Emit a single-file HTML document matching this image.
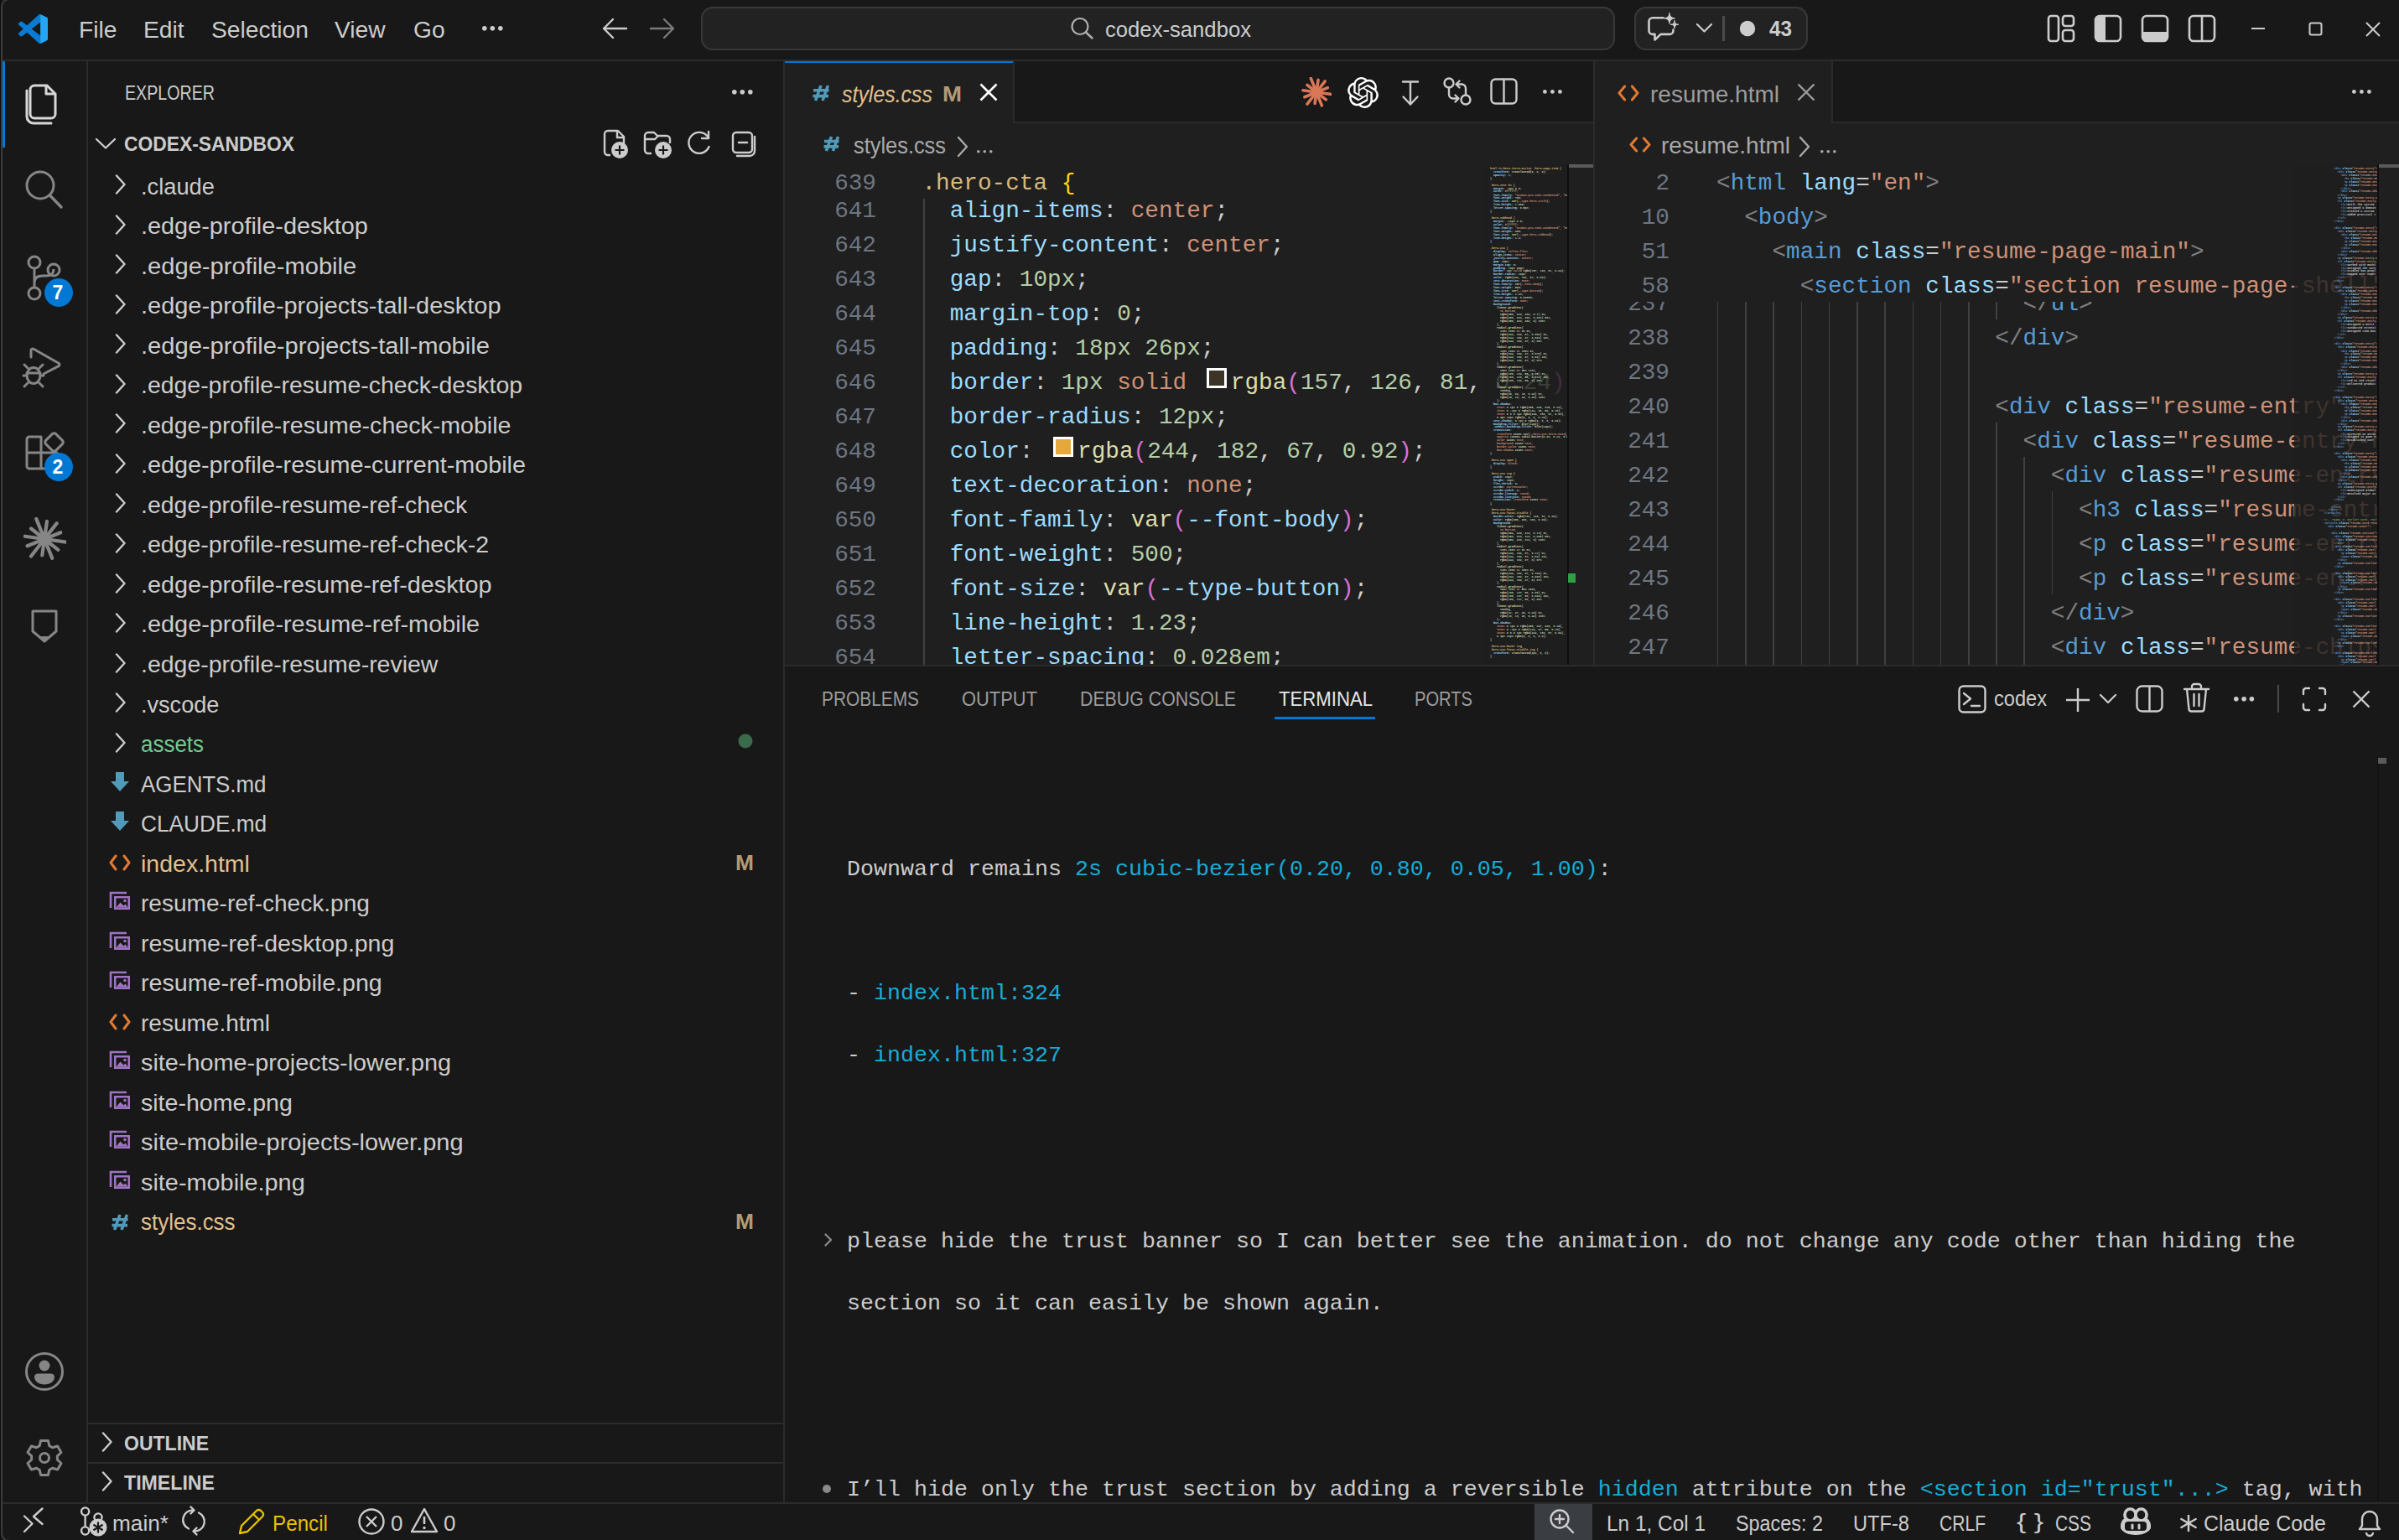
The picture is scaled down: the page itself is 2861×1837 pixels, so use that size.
<!DOCTYPE html><html><head><meta charset="utf-8"><style>
html,body{margin:0;padding:0;width:2861px;height:1837px;overflow:hidden;background:#181818;}
body{position:relative;font-family:"Liberation Sans",sans-serif;}
svg{display:block}
</style></head><body>
<div style="position:absolute;left:0px;top:0px;width:2861px;height:1837px;background:#181818;"></div>
<div style="position:absolute;left:0px;top:71px;width:2861px;height:2px;background:#2b2b2b;"></div>
<div style="position:absolute;left:103px;top:73px;width:2px;height:1719px;background:#2b2b2b;"></div>
<div style="position:absolute;left:934px;top:73px;width:2px;height:1719px;background:#2b2b2b;"></div>
<div style="position:absolute;left:936px;top:73px;width:1925px;height:722px;background:#1f1f1f;"></div>
<div style="position:absolute;left:936px;top:793px;width:1925px;height:2px;background:#2b2b2b;"></div>
<svg style="position:absolute;left:22px;top:17px;" width="35" height="35" viewBox="0 0 100 100" fill="none"><path d="M96.46 10.8 75.86.87a6.23 6.23 0 0 0-7.1 1.2L29.35 38.04 12.19 25.01a4.16 4.16 0 0 0-5.32.24L1.36 30.26a4.16 4.16 0 0 0 0 6.16L16.24 50 1.36 63.58a4.16 4.16 0 0 0 0 6.16l5.51 5.01a4.16 4.16 0 0 0 5.32.24l17.16-13.03 39.41 35.96a6.23 6.23 0 0 0 7.1 1.2l20.6-9.91A6.24 6.24 0 0 0 100 83.6V16.4a6.24 6.24 0 0 0-3.54-5.6zM75.02 72.7 45.11 50l29.91-22.7z" fill="#0a7bd0"/><path d="M75.02 0.6 L96.46 10.8 A6.24 6.24 0 0 1 100 16.4 V83.6 A6.24 6.24 0 0 1 96.46 89.2 L75.86 99.1 A6.23 6.23 0 0 1 75 99.4 Z" fill="#24a6f2"/></svg>
<div style="position:absolute;left:94px;top:17.40px;font-family:'Liberation Sans', sans-serif;font-size:28.2px;line-height:36.66px;color:#cccccc;white-space:pre;">File</div>
<div style="position:absolute;left:171px;top:17.40px;font-family:'Liberation Sans', sans-serif;font-size:28.2px;line-height:36.66px;color:#cccccc;white-space:pre;">Edit</div>
<div style="position:absolute;left:252px;top:17.40px;font-family:'Liberation Sans', sans-serif;font-size:28.2px;line-height:36.66px;color:#cccccc;white-space:pre;">Selection</div>
<div style="position:absolute;left:399px;top:17.40px;font-family:'Liberation Sans', sans-serif;font-size:28.2px;line-height:36.66px;color:#cccccc;white-space:pre;">View</div>
<div style="position:absolute;left:493px;top:17.40px;font-family:'Liberation Sans', sans-serif;font-size:28.2px;line-height:36.66px;color:#cccccc;white-space:pre;">Go</div>
<svg style="position:absolute;left:575px;top:31.2px;" width="25" height="6" viewBox="0 0 25 6" fill="none"><circle cx="2.8" cy="2.8" r="2.8" fill="#cccccc"/><circle cx="12.3" cy="2.8" r="2.8" fill="#cccccc"/><circle cx="21.8" cy="2.8" r="2.8" fill="#cccccc"/></svg>
<svg style="position:absolute;left:716px;top:19px;" width="34" height="30" viewBox="0 0 34 30" fill="none"><path d="M4 15H31M15 4 4 15 15 26" stroke="#cccccc" stroke-width="2.4" stroke-linecap="round" stroke-linejoin="round"/></svg>
<svg style="position:absolute;left:773px;top:19px;" width="34" height="30" viewBox="0 0 34 30" fill="none"><path d="M3 15H30M19 4 30 15 19 26" stroke="#7a7a7a" stroke-width="2.4" stroke-linecap="round" stroke-linejoin="round"/></svg>
<div style="position:absolute;left:836px;top:8px;width:1090px;height:52px;background:#222222;box-sizing:border-box;border:2px solid #383838;border-radius:14px;"></div>
<svg style="position:absolute;left:1276px;top:20px;" width="30" height="28" viewBox="0 0 30 28" fill="none"><circle cx="12" cy="11.5" r="9.5" stroke="#b0b0b0" stroke-width="2.2"/><path d="M19 18.5 26.5 25.5" stroke="#b0b0b0" stroke-width="2.4" stroke-linecap="round"/></svg>
<div style="position:absolute;left:1318px;top:19.09px;font-family:'Liberation Sans', sans-serif;font-size:26px;line-height:33.8px;color:#cccccc;white-space:pre;transform:scaleX(0.9867);transform-origin:0 0;">codex-sandbox</div>
<div style="position:absolute;left:1949px;top:8px;width:207px;height:52px;background:#222222;box-sizing:border-box;border:2px solid #383838;border-radius:14px;"></div>
<svg style="position:absolute;left:1963px;top:15px;" width="42" height="36" viewBox="0 0 42 36" fill="none"><path d="M20.5 6.2H8a4.5 4.5 0 0 0-4.5 4.5V21.4a4.5 4.5 0 0 0 4.5 4.5h2.5v6.6l7-6.6H28a4.5 4.5 0 0 0 4.5-4.5V20.5" stroke="#cccccc" stroke-width="2.6" stroke-linejoin="round" stroke-linecap="round"/><path d="M28 0.5999999999999996Q28 6.8 34.2 6.8Q28 6.8 28 13.0Q28 6.8 21.8 6.8Q28 6.8 28 0.5999999999999996Z" fill="#cccccc" stroke="#cccccc" stroke-width="1.2" stroke-linejoin="round"/><path d="M34 9.399999999999999Q34 14.2 38.8 14.2Q34 14.2 34 19.0Q34 14.2 29.2 14.2Q34 14.2 34 9.399999999999999Z" fill="#cccccc" stroke="#cccccc" stroke-width="1.0" stroke-linejoin="round"/></svg>
<svg style="position:absolute;left:2022px;top:26px;" width="21" height="14" viewBox="0 0 21 14" fill="none"><path d="M2 3l8.5 8.5L19 3" stroke="#cccccc" stroke-width="2.2" stroke-linecap="round" stroke-linejoin="round"/></svg>
<div style="position:absolute;left:2054px;top:19px;width:3px;height:30px;background:#4a4a4a;"></div>
<svg style="position:absolute;left:2074px;top:24px;" width="20" height="20" viewBox="0 0 20 20" fill="none"><circle cx="10" cy="10" r="9.2" fill="#cccccc"/></svg>
<div style="position:absolute;left:2110px;top:18.09px;font-family:'Liberation Sans', sans-serif;font-size:26px;line-height:33.8px;color:#cccccc;white-space:pre;font-weight:700;transform:scaleX(0.9335);transform-origin:0 0;">43</div>
<svg style="position:absolute;left:2440px;top:16px;" width="36" height="36" viewBox="0 0 36 36" fill="none"><rect x="3" y="3" width="12" height="30" rx="3" stroke="#cccccc" stroke-width="2.6"/><rect x="20" y="3" width="13" height="12" rx="3" stroke="#cccccc" stroke-width="2.6"/><rect x="20" y="20" width="13" height="13" rx="3" stroke="#cccccc" stroke-width="2.6"/></svg>
<svg style="position:absolute;left:2496px;top:16px;" width="36" height="36" viewBox="0 0 36 36" fill="none"><rect x="3" y="3" width="30" height="30" rx="5" stroke="#cccccc" stroke-width="2.6"/><path d="M3 8a5 5 0 0 1 5-5h7v30H8a5 5 0 0 1-5-5z" fill="#cccccc"/></svg>
<svg style="position:absolute;left:2552px;top:16px;" width="36" height="36" viewBox="0 0 36 36" fill="none"><rect x="3" y="3" width="30" height="30" rx="5" stroke="#cccccc" stroke-width="2.6"/><path d="M3 22h30v6a5 5 0 0 1-5 5H8a5 5 0 0 1-5-5z" fill="#cccccc"/></svg>
<svg style="position:absolute;left:2608px;top:16px;" width="36" height="36" viewBox="0 0 36 36" fill="none"><rect x="3" y="3" width="30" height="30" rx="5" stroke="#cccccc" stroke-width="2.6"/><path d="M18 3v30" stroke="#cccccc" stroke-width="2.6"/></svg>
<div style="position:absolute;left:2685px;top:33px;width:16px;height:2px;background:#cccccc;"></div>
<svg style="position:absolute;left:2752px;top:25px;" width="20" height="20" viewBox="0 0 20 20" fill="none"><rect x="2.5" y="2.5" width="14" height="14" rx="2" stroke="#cccccc" stroke-width="2"/></svg>
<svg style="position:absolute;left:2820px;top:25px;" width="20" height="20" viewBox="0 0 20 20" fill="none"><path d="M2 2l16 16M18 2 2 18" stroke="#cccccc" stroke-width="2"/></svg>
<div style="position:absolute;left:3px;top:73px;width:3px;height:103px;background:#0078d4;"></div>
<svg style="position:absolute;left:28px;top:96px;" width="48" height="56" viewBox="0 0 48 56" fill="none"><path d="M13 6h15l10 10v24a5 5 0 0 1-5 5H13a5 5 0 0 1-5-5V11a5 5 0 0 1 5-5z" stroke="#d7d7d7" stroke-width="3"/><path d="M27 6v10h11" stroke="#d7d7d7" stroke-width="3" stroke-linejoin="round"/><path d="M4 12v31a8 8 0 0 0 8 8h21" stroke="#d7d7d7" stroke-width="3" stroke-linecap="round"/></svg>
<svg style="position:absolute;left:28px;top:202px;" width="50" height="50" viewBox="0 0 50 50" fill="none"><circle cx="20" cy="19" r="16" stroke="#868686" stroke-width="3"/><path d="M31.5 31 45 45" stroke="#868686" stroke-width="3.4" stroke-linecap="round"/></svg>
<svg style="position:absolute;left:30px;top:303px;" width="46" height="56" viewBox="0 0 46 56" fill="none"><circle cx="11" cy="10" r="7" stroke="#868686" stroke-width="3"/><circle cx="11" cy="47" r="7" stroke="#868686" stroke-width="3"/><circle cx="34" cy="19" r="7" stroke="#868686" stroke-width="3"/><path d="M11 17v23M11 34c0-6 4-8 10-8h4c5 0 9-2 9-8" stroke="#868686" stroke-width="3"/></svg>
<svg style="position:absolute;left:52px;top:331px;" width="36" height="36" viewBox="0 0 36 36" fill="none"><circle cx="18" cy="18" r="17" fill="#0078d4"/></svg>
<div style="position:absolute;left:62.5px;top:334.58px;font-family:'Liberation Sans', sans-serif;font-size:23px;line-height:29.9px;color:#ffffff;white-space:pre;font-weight:700;">7</div>
<svg style="position:absolute;left:24px;top:412px;" width="52" height="52" viewBox="0 0 52 52" fill="none"><path d="M13 14V6a2 2 0 0 1 3-1.7l30 17a2 2 0 0 1 0 3.4L28 34" stroke="#868686" stroke-width="3" stroke-linejoin="round" stroke-linecap="round"/><ellipse cx="16" cy="36" rx="8" ry="9.5" stroke="#868686" stroke-width="3"/><path d="M9 27l-4-4M23 27l4-4M4 36h4M24 36h4M9 45l-4 4M23 45l4 4M8 33h16" stroke="#868686" stroke-width="3" stroke-linecap="round"/></svg>
<svg style="position:absolute;left:28px;top:512px;" width="52" height="52" viewBox="0 0 52 52" fill="none"><path d="M4 12a3 3 0 0 1 3-3h14v38H7a3 3 0 0 1-3-3z M4 28h36v16a3 3 0 0 1-3 3H21" stroke="#868686" stroke-width="3" stroke-linejoin="round"/><rect x="28" y="7" width="17" height="17" rx="3" transform="rotate(45 36.5 15.5)" stroke="#868686" stroke-width="3"/></svg>
<svg style="position:absolute;left:52px;top:539px;" width="36" height="36" viewBox="0 0 36 36" fill="none"><circle cx="18" cy="18" r="17" fill="#0078d4"/></svg>
<div style="position:absolute;left:62.5px;top:542.58px;font-family:'Liberation Sans', sans-serif;font-size:23px;line-height:29.9px;color:#ffffff;white-space:pre;font-weight:700;">2</div>
<svg style="position:absolute;left:27px;top:617px;" width="52" height="52" viewBox="0 0 52 52" fill="none"><path d="M26 26L51.75 29.62" stroke="#868686" stroke-width="4.2" stroke-linecap="round"/><path d="M26 26L42.39 38.81" stroke="#868686" stroke-width="4.2" stroke-linecap="round"/><path d="M26 26L35.25 48.90" stroke="#868686" stroke-width="4.2" stroke-linecap="round"/><path d="M26 26L23.29 45.31" stroke="#868686" stroke-width="4.2" stroke-linecap="round"/><path d="M26 26L9.99 46.49" stroke="#868686" stroke-width="4.2" stroke-linecap="round"/><path d="M26 26L5.51 34.28" stroke="#868686" stroke-width="4.2" stroke-linecap="round"/><path d="M26 26L2.83 22.74" stroke="#868686" stroke-width="4.2" stroke-linecap="round"/><path d="M26 26L10.02 13.51" stroke="#868686" stroke-width="4.2" stroke-linecap="round"/><path d="M26 26L16.26 1.89" stroke="#868686" stroke-width="4.2" stroke-linecap="round"/><path d="M26 26L28.97 4.89" stroke="#868686" stroke-width="4.2" stroke-linecap="round"/><path d="M26 26L40.73 7.15" stroke="#868686" stroke-width="4.2" stroke-linecap="round"/><path d="M26 26L45.29 18.21" stroke="#868686" stroke-width="4.2" stroke-linecap="round"/></svg>
<svg style="position:absolute;left:34px;top:725px;" width="38" height="44" viewBox="0 0 38 44" fill="none"><path d="M5 4h28v24L19 40 5 28z" stroke="#868686" stroke-width="3" stroke-linejoin="round"/><path d="M13 34l6 6 6-6z" fill="#868686"/></svg>
<svg style="position:absolute;left:29px;top:1612px;" width="50" height="50" viewBox="0 0 50 50" fill="none"><circle cx="24" cy="24" r="21.5" stroke="#868686" stroke-width="3"/><circle cx="24" cy="17" r="6.5" fill="#868686"/><path d="M12 30.5c0-2.5 2-4 4.5-4h15c2.5 0 4.5 1.5 4.5 4 0 5-5 9-12 9s-12-4-12-9z" fill="#868686"/></svg>
<svg style="position:absolute;left:29px;top:1715px;" width="48" height="48" viewBox="0 0 48 48" fill="none"><path d="M18.19 9.63L19.63 3.46L28.37 3.46L29.81 9.63L33.54 11.79L39.61 9.95L43.97 17.51L39.35 21.84L39.35 26.16L43.97 30.49L39.61 38.05L33.54 36.21L29.81 38.37L28.37 44.54L19.63 44.54L18.19 38.37L14.46 36.21L8.39 38.05L4.03 30.49L8.65 26.16L8.65 21.84L4.03 17.51L8.39 9.95L14.46 11.79Z" stroke="#868686" stroke-width="3" stroke-linejoin="round"/><circle cx="24" cy="24" r="5.5" stroke="#868686" stroke-width="3"/></svg>
<div style="position:absolute;left:105px;top:73px;width:829px;height:1719px;background:#181818;"></div>
<div style="position:absolute;left:149.4px;top:96.28px;font-family:'Liberation Sans', sans-serif;font-size:23.8px;line-height:30.94px;color:#cccccc;white-space:pre;transform:scaleX(0.8256);transform-origin:0 0;">EXPLORER</div>
<svg style="position:absolute;left:873px;top:107.2px;" width="25" height="6" viewBox="0 0 25 6" fill="none"><circle cx="2.8" cy="2.8" r="2.8" fill="#cccccc"/><circle cx="12.3" cy="2.8" r="2.8" fill="#cccccc"/><circle cx="21.8" cy="2.8" r="2.8" fill="#cccccc"/></svg>
<svg style="position:absolute;left:113px;top:163px;" width="26" height="16" viewBox="0 0 26 16" fill="none"><path d="M2 3l11 10.5L24 3" stroke="#cccccc" stroke-width="2.4" stroke-linecap="round" stroke-linejoin="round"/></svg>
<div style="position:absolute;left:148px;top:157.28px;font-family:'Liberation Sans', sans-serif;font-size:23.8px;line-height:30.94px;color:#cccccc;white-space:pre;font-weight:700;transform:scaleX(0.9596);transform-origin:0 0;">CODEX-SANDBOX</div>
<svg style="position:absolute;left:716px;top:152px;" width="36" height="38" viewBox="0 0 36 38" fill="none"><path d="M12 33H9a4 4 0 0 1-4-4V8a4 4 0 0 1 4-4h12l7 7v8" stroke="#cccccc" stroke-width="2.4" stroke-linejoin="round"/><path d="M20 4v8h8" stroke="#cccccc" stroke-width="2.4"/><circle cx="23" cy="27" r="10" fill="#cccccc"/><path d="M23 21.5v11M17.5 27h11" stroke="#181818" stroke-width="2.2"/></svg>
<svg style="position:absolute;left:764px;top:152px;" width="40" height="38" viewBox="0 0 40 38" fill="none"><path d="M13 31H9a4 4 0 0 1-4-4V10a4 4 0 0 1 4-4h7l4 4h11a4 4 0 0 1 4 4v5" stroke="#cccccc" stroke-width="2.4" stroke-linejoin="round"/><path d="M5 14h12l4-4" stroke="#cccccc" stroke-width="2.4" stroke-linejoin="round"/><circle cx="27" cy="27" r="10" fill="#cccccc"/><path d="M27 21.5v11M21.5 27h11" stroke="#181818" stroke-width="2.2"/></svg>
<svg style="position:absolute;left:818px;top:154px;" width="34" height="34" viewBox="0 0 34 34" fill="none"><path d="M27.5 21a12.5 12.5 0 1 1-1.5-12" stroke="#cccccc" stroke-width="2.4" stroke-linecap="round"/><path d="M27 3v8h-8" stroke="#cccccc" stroke-width="2.4" stroke-linecap="round" stroke-linejoin="round"/></svg>
<svg style="position:absolute;left:870px;top:154px;" width="36" height="36" viewBox="0 0 36 36" fill="none"><rect x="4" y="4" width="23" height="24" rx="4" stroke="#cccccc" stroke-width="2.4"/><path d="M30 9v17a6 6 0 0 1-6 6H9" stroke="#cccccc" stroke-width="2.4" stroke-linecap="round"/><path d="M11 16h10" stroke="#cccccc" stroke-width="2.6" stroke-linecap="round"/></svg>
<svg style="position:absolute;left:135.7px;top:208.25px;" width="16" height="24" viewBox="0 0 16 24" fill="none"><path d="M3 1.5 12.5 12.0 3 22.5" stroke="#cccccc" stroke-width="2.4" stroke-linecap="round" stroke-linejoin="round"/></svg>
<div style="position:absolute;left:168.3px;top:203.65px;font-family:'Liberation Sans', sans-serif;font-size:28.2px;line-height:36.66px;color:#cccccc;white-space:pre;transform:scaleX(0.9669);transform-origin:0 0;">.claude</div>
<svg style="position:absolute;left:135.7px;top:255.77999999999997px;" width="16" height="24" viewBox="0 0 16 24" fill="none"><path d="M3 1.5 12.5 12.0 3 22.5" stroke="#cccccc" stroke-width="2.4" stroke-linecap="round" stroke-linejoin="round"/></svg>
<div style="position:absolute;left:168.3px;top:251.18px;font-family:'Liberation Sans', sans-serif;font-size:28.2px;line-height:36.66px;color:#cccccc;white-space:pre;transform:scaleX(1.0230);transform-origin:0 0;">.edge-profile-desktop</div>
<svg style="position:absolute;left:135.7px;top:303.31px;" width="16" height="24" viewBox="0 0 16 24" fill="none"><path d="M3 1.5 12.5 12.0 3 22.5" stroke="#cccccc" stroke-width="2.4" stroke-linecap="round" stroke-linejoin="round"/></svg>
<div style="position:absolute;left:168.3px;top:298.71px;font-family:'Liberation Sans', sans-serif;font-size:28.2px;line-height:36.66px;color:#cccccc;white-space:pre;transform:scaleX(1.0324);transform-origin:0 0;">.edge-profile-mobile</div>
<svg style="position:absolute;left:135.7px;top:350.84000000000003px;" width="16" height="24" viewBox="0 0 16 24" fill="none"><path d="M3 1.5 12.5 12.0 3 22.5" stroke="#cccccc" stroke-width="2.4" stroke-linecap="round" stroke-linejoin="round"/></svg>
<div style="position:absolute;left:168.3px;top:346.24px;font-family:'Liberation Sans', sans-serif;font-size:28.2px;line-height:36.66px;color:#cccccc;white-space:pre;transform:scaleX(1.0267);transform-origin:0 0;">.edge-profile-projects-tall-desktop</div>
<svg style="position:absolute;left:135.7px;top:398.37px;" width="16" height="24" viewBox="0 0 16 24" fill="none"><path d="M3 1.5 12.5 12.0 3 22.5" stroke="#cccccc" stroke-width="2.4" stroke-linecap="round" stroke-linejoin="round"/></svg>
<div style="position:absolute;left:168.3px;top:393.77px;font-family:'Liberation Sans', sans-serif;font-size:28.2px;line-height:36.66px;color:#cccccc;white-space:pre;transform:scaleX(1.0330);transform-origin:0 0;">.edge-profile-projects-tall-mobile</div>
<svg style="position:absolute;left:135.7px;top:445.9px;" width="16" height="24" viewBox="0 0 16 24" fill="none"><path d="M3 1.5 12.5 12.0 3 22.5" stroke="#cccccc" stroke-width="2.4" stroke-linecap="round" stroke-linejoin="round"/></svg>
<div style="position:absolute;left:168.3px;top:441.30px;font-family:'Liberation Sans', sans-serif;font-size:28.2px;line-height:36.66px;color:#cccccc;white-space:pre;transform:scaleX(1.0086);transform-origin:0 0;">.edge-profile-resume-check-desktop</div>
<svg style="position:absolute;left:135.7px;top:493.43000000000006px;" width="16" height="24" viewBox="0 0 16 24" fill="none"><path d="M3 1.5 12.5 12.0 3 22.5" stroke="#cccccc" stroke-width="2.4" stroke-linecap="round" stroke-linejoin="round"/></svg>
<div style="position:absolute;left:168.3px;top:488.83px;font-family:'Liberation Sans', sans-serif;font-size:28.2px;line-height:36.66px;color:#cccccc;white-space:pre;transform:scaleX(1.0135);transform-origin:0 0;">.edge-profile-resume-check-mobile</div>
<svg style="position:absolute;left:135.7px;top:540.96px;" width="16" height="24" viewBox="0 0 16 24" fill="none"><path d="M3 1.5 12.5 12.0 3 22.5" stroke="#cccccc" stroke-width="2.4" stroke-linecap="round" stroke-linejoin="round"/></svg>
<div style="position:absolute;left:168.3px;top:536.36px;font-family:'Liberation Sans', sans-serif;font-size:28.2px;line-height:36.66px;color:#cccccc;white-space:pre;transform:scaleX(1.0209);transform-origin:0 0;">.edge-profile-resume-current-mobile</div>
<svg style="position:absolute;left:135.7px;top:588.49px;" width="16" height="24" viewBox="0 0 16 24" fill="none"><path d="M3 1.5 12.5 12.0 3 22.5" stroke="#cccccc" stroke-width="2.4" stroke-linecap="round" stroke-linejoin="round"/></svg>
<div style="position:absolute;left:168.3px;top:583.89px;font-family:'Liberation Sans', sans-serif;font-size:28.2px;line-height:36.66px;color:#cccccc;white-space:pre;transform:scaleX(1.0101);transform-origin:0 0;">.edge-profile-resume-ref-check</div>
<svg style="position:absolute;left:135.7px;top:636.02px;" width="16" height="24" viewBox="0 0 16 24" fill="none"><path d="M3 1.5 12.5 12.0 3 22.5" stroke="#cccccc" stroke-width="2.4" stroke-linecap="round" stroke-linejoin="round"/></svg>
<div style="position:absolute;left:168.3px;top:631.42px;font-family:'Liberation Sans', sans-serif;font-size:28.2px;line-height:36.66px;color:#cccccc;white-space:pre;transform:scaleX(1.0113);transform-origin:0 0;">.edge-profile-resume-ref-check-2</div>
<svg style="position:absolute;left:135.7px;top:683.55px;" width="16" height="24" viewBox="0 0 16 24" fill="none"><path d="M3 1.5 12.5 12.0 3 22.5" stroke="#cccccc" stroke-width="2.4" stroke-linecap="round" stroke-linejoin="round"/></svg>
<div style="position:absolute;left:168.3px;top:678.95px;font-family:'Liberation Sans', sans-serif;font-size:28.2px;line-height:36.66px;color:#cccccc;white-space:pre;transform:scaleX(1.0196);transform-origin:0 0;">.edge-profile-resume-ref-desktop</div>
<svg style="position:absolute;left:135.7px;top:731.08px;" width="16" height="24" viewBox="0 0 16 24" fill="none"><path d="M3 1.5 12.5 12.0 3 22.5" stroke="#cccccc" stroke-width="2.4" stroke-linecap="round" stroke-linejoin="round"/></svg>
<div style="position:absolute;left:168.3px;top:726.48px;font-family:'Liberation Sans', sans-serif;font-size:28.2px;line-height:36.66px;color:#cccccc;white-space:pre;transform:scaleX(1.0236);transform-origin:0 0;">.edge-profile-resume-ref-mobile</div>
<svg style="position:absolute;left:135.7px;top:778.61px;" width="16" height="24" viewBox="0 0 16 24" fill="none"><path d="M3 1.5 12.5 12.0 3 22.5" stroke="#cccccc" stroke-width="2.4" stroke-linecap="round" stroke-linejoin="round"/></svg>
<div style="position:absolute;left:168.3px;top:774.01px;font-family:'Liberation Sans', sans-serif;font-size:28.2px;line-height:36.66px;color:#cccccc;white-space:pre;transform:scaleX(1.0099);transform-origin:0 0;">.edge-profile-resume-review</div>
<svg style="position:absolute;left:135.7px;top:826.14px;" width="16" height="24" viewBox="0 0 16 24" fill="none"><path d="M3 1.5 12.5 12.0 3 22.5" stroke="#cccccc" stroke-width="2.4" stroke-linecap="round" stroke-linejoin="round"/></svg>
<div style="position:absolute;left:168.3px;top:821.54px;font-family:'Liberation Sans', sans-serif;font-size:28.2px;line-height:36.66px;color:#cccccc;white-space:pre;transform:scaleX(0.9613);transform-origin:0 0;">.vscode</div>
<svg style="position:absolute;left:135.7px;top:873.6700000000001px;" width="16" height="24" viewBox="0 0 16 24" fill="none"><path d="M3 1.5 12.5 12.0 3 22.5" stroke="#cccccc" stroke-width="2.4" stroke-linecap="round" stroke-linejoin="round"/></svg>
<svg style="position:absolute;left:879px;top:874.1700000000001px;" width="20" height="20" viewBox="0 0 20 20" fill="none"><circle cx="10" cy="10" r="8.5" fill="#3a6b4a"/></svg>
<div style="position:absolute;left:168.3px;top:869.07px;font-family:'Liberation Sans', sans-serif;font-size:28.2px;line-height:36.66px;color:#73c991;white-space:pre;transform:scaleX(0.9206);transform-origin:0 0;">assets</div>
<svg style="position:absolute;left:131px;top:919.7px;" width="24" height="25" viewBox="0 0 24 25" fill="none"><path d="M7 1h10v11h6L12 24 1 12h6z" fill="#519aba"/></svg>
<div style="position:absolute;left:168.3px;top:916.60px;font-family:'Liberation Sans', sans-serif;font-size:28.2px;line-height:36.66px;color:#cccccc;white-space:pre;transform:scaleX(0.9178);transform-origin:0 0;">AGENTS.md</div>
<svg style="position:absolute;left:131px;top:967.23px;" width="24" height="25" viewBox="0 0 24 25" fill="none"><path d="M7 1h10v11h6L12 24 1 12h6z" fill="#519aba"/></svg>
<div style="position:absolute;left:168.3px;top:964.13px;font-family:'Liberation Sans', sans-serif;font-size:28.2px;line-height:36.66px;color:#cccccc;white-space:pre;transform:scaleX(0.9309);transform-origin:0 0;">CLAUDE.md</div>
<svg style="position:absolute;left:130px;top:1018.76px;" width="26" height="20" viewBox="0 0 26 20" fill="none"><path d="M8 2 2 10l6 8M18 2l6 8-6 8" stroke="#e37933" stroke-width="3" stroke-linecap="round" stroke-linejoin="round"/></svg>
<div style="position:absolute;left:877px;top:1012.85px;font-family:'Liberation Sans', sans-serif;font-size:26px;line-height:33.8px;color:#b39a74;white-space:pre;font-weight:700;transform:scaleX(1.0151);transform-origin:0 0;">M</div>
<div style="position:absolute;left:168.3px;top:1011.66px;font-family:'Liberation Sans', sans-serif;font-size:28.2px;line-height:36.66px;color:#e2c08d;white-space:pre;transform:scaleX(1.0111);transform-origin:0 0;">index.html</div>
<svg style="position:absolute;left:130px;top:1063.29px;" width="27" height="24" viewBox="0 0 27 24" fill="none"><path d="M2 20V2h19" stroke="#a074c4" stroke-width="2.6"/><rect x="6" y="6" width="19" height="16" fill="#a074c4"/><rect x="8.5" y="8.5" width="14" height="11" fill="#181818"/><path d="M8.5 19.5l5-6 4 4 2-2 3 4z" fill="#a074c4"/><circle cx="19" cy="11.5" r="1.8" fill="#a074c4"/></svg>
<div style="position:absolute;left:168.3px;top:1059.19px;font-family:'Liberation Sans', sans-serif;font-size:28.2px;line-height:36.66px;color:#cccccc;white-space:pre;transform:scaleX(0.9954);transform-origin:0 0;">resume-ref-check.png</div>
<svg style="position:absolute;left:130px;top:1110.8200000000002px;" width="27" height="24" viewBox="0 0 27 24" fill="none"><path d="M2 20V2h19" stroke="#a074c4" stroke-width="2.6"/><rect x="6" y="6" width="19" height="16" fill="#a074c4"/><rect x="8.5" y="8.5" width="14" height="11" fill="#181818"/><path d="M8.5 19.5l5-6 4 4 2-2 3 4z" fill="#a074c4"/><circle cx="19" cy="11.5" r="1.8" fill="#a074c4"/></svg>
<div style="position:absolute;left:168.3px;top:1106.72px;font-family:'Liberation Sans', sans-serif;font-size:28.2px;line-height:36.66px;color:#cccccc;white-space:pre;transform:scaleX(1.0102);transform-origin:0 0;">resume-ref-desktop.png</div>
<svg style="position:absolute;left:130px;top:1158.35px;" width="27" height="24" viewBox="0 0 27 24" fill="none"><path d="M2 20V2h19" stroke="#a074c4" stroke-width="2.6"/><rect x="6" y="6" width="19" height="16" fill="#a074c4"/><rect x="8.5" y="8.5" width="14" height="11" fill="#181818"/><path d="M8.5 19.5l5-6 4 4 2-2 3 4z" fill="#a074c4"/><circle cx="19" cy="11.5" r="1.8" fill="#a074c4"/></svg>
<div style="position:absolute;left:168.3px;top:1154.25px;font-family:'Liberation Sans', sans-serif;font-size:28.2px;line-height:36.66px;color:#cccccc;white-space:pre;transform:scaleX(1.0149);transform-origin:0 0;">resume-ref-mobile.png</div>
<svg style="position:absolute;left:130px;top:1208.88px;" width="26" height="20" viewBox="0 0 26 20" fill="none"><path d="M8 2 2 10l6 8M18 2l6 8-6 8" stroke="#e37933" stroke-width="3" stroke-linecap="round" stroke-linejoin="round"/></svg>
<div style="position:absolute;left:168.3px;top:1201.78px;font-family:'Liberation Sans', sans-serif;font-size:28.2px;line-height:36.66px;color:#cccccc;white-space:pre;transform:scaleX(0.9937);transform-origin:0 0;">resume.html</div>
<svg style="position:absolute;left:130px;top:1253.41px;" width="27" height="24" viewBox="0 0 27 24" fill="none"><path d="M2 20V2h19" stroke="#a074c4" stroke-width="2.6"/><rect x="6" y="6" width="19" height="16" fill="#a074c4"/><rect x="8.5" y="8.5" width="14" height="11" fill="#181818"/><path d="M8.5 19.5l5-6 4 4 2-2 3 4z" fill="#a074c4"/><circle cx="19" cy="11.5" r="1.8" fill="#a074c4"/></svg>
<div style="position:absolute;left:168.3px;top:1249.31px;font-family:'Liberation Sans', sans-serif;font-size:28.2px;line-height:36.66px;color:#cccccc;white-space:pre;transform:scaleX(1.0226);transform-origin:0 0;">site-home-projects-lower.png</div>
<svg style="position:absolute;left:130px;top:1300.94px;" width="27" height="24" viewBox="0 0 27 24" fill="none"><path d="M2 20V2h19" stroke="#a074c4" stroke-width="2.6"/><rect x="6" y="6" width="19" height="16" fill="#a074c4"/><rect x="8.5" y="8.5" width="14" height="11" fill="#181818"/><path d="M8.5 19.5l5-6 4 4 2-2 3 4z" fill="#a074c4"/><circle cx="19" cy="11.5" r="1.8" fill="#a074c4"/></svg>
<div style="position:absolute;left:168.3px;top:1296.84px;font-family:'Liberation Sans', sans-serif;font-size:28.2px;line-height:36.66px;color:#cccccc;white-space:pre;transform:scaleX(1.0122);transform-origin:0 0;">site-home.png</div>
<svg style="position:absolute;left:130px;top:1348.47px;" width="27" height="24" viewBox="0 0 27 24" fill="none"><path d="M2 20V2h19" stroke="#a074c4" stroke-width="2.6"/><rect x="6" y="6" width="19" height="16" fill="#a074c4"/><rect x="8.5" y="8.5" width="14" height="11" fill="#181818"/><path d="M8.5 19.5l5-6 4 4 2-2 3 4z" fill="#a074c4"/><circle cx="19" cy="11.5" r="1.8" fill="#a074c4"/></svg>
<div style="position:absolute;left:168.3px;top:1344.37px;font-family:'Liberation Sans', sans-serif;font-size:28.2px;line-height:36.66px;color:#cccccc;white-space:pre;transform:scaleX(1.0269);transform-origin:0 0;">site-mobile-projects-lower.png</div>
<svg style="position:absolute;left:130px;top:1396.0px;" width="27" height="24" viewBox="0 0 27 24" fill="none"><path d="M2 20V2h19" stroke="#a074c4" stroke-width="2.6"/><rect x="6" y="6" width="19" height="16" fill="#a074c4"/><rect x="8.5" y="8.5" width="14" height="11" fill="#181818"/><path d="M8.5 19.5l5-6 4 4 2-2 3 4z" fill="#a074c4"/><circle cx="19" cy="11.5" r="1.8" fill="#a074c4"/></svg>
<div style="position:absolute;left:168.3px;top:1391.90px;font-family:'Liberation Sans', sans-serif;font-size:28.2px;line-height:36.66px;color:#cccccc;white-space:pre;transform:scaleX(1.0238);transform-origin:0 0;">site-mobile.png</div>
<svg style="position:absolute;left:133px;top:1447.53px;" width="20" height="20" viewBox="0 0 20 20" fill="none"><path d="M10.0 1 3.6 19M18.4 1 12.0 19" stroke="#519aba" stroke-width="3.6"/><path d="M1 6.8H19.5M0.5 13.6H19" stroke="#519aba" stroke-width="3.6"/></svg>
<div style="position:absolute;left:877px;top:1440.62px;font-family:'Liberation Sans', sans-serif;font-size:26px;line-height:33.8px;color:#b39a74;white-space:pre;font-weight:700;transform:scaleX(1.0151);transform-origin:0 0;">M</div>
<div style="position:absolute;left:168.3px;top:1439.43px;font-family:'Liberation Sans', sans-serif;font-size:28.2px;line-height:36.66px;color:#e2c08d;white-space:pre;transform:scaleX(0.9217);transform-origin:0 0;">styles.css</div>
<div style="position:absolute;left:105px;top:1697px;width:829px;height:2px;background:#2b2b2b;"></div>
<div style="position:absolute;left:105px;top:1744px;width:829px;height:2px;background:#2b2b2b;"></div>
<svg style="position:absolute;left:120px;top:1708px;" width="16" height="24" viewBox="0 0 16 24" fill="none"><path d="M3 1.5 12.5 12.0 3 22.5" stroke="#cccccc" stroke-width="2.4" stroke-linecap="round" stroke-linejoin="round"/></svg>
<div style="position:absolute;left:148px;top:1707.28px;font-family:'Liberation Sans', sans-serif;font-size:23.8px;line-height:30.94px;color:#cccccc;white-space:pre;font-weight:700;transform:scaleX(0.9671);transform-origin:0 0;">OUTLINE</div>
<svg style="position:absolute;left:120px;top:1755px;" width="16" height="24" viewBox="0 0 16 24" fill="none"><path d="M3 1.5 12.5 12.0 3 22.5" stroke="#cccccc" stroke-width="2.4" stroke-linecap="round" stroke-linejoin="round"/></svg>
<div style="position:absolute;left:148px;top:1754.28px;font-family:'Liberation Sans', sans-serif;font-size:23.8px;line-height:30.94px;color:#cccccc;white-space:pre;font-weight:700;transform:scaleX(0.9724);transform-origin:0 0;">TIMELINE</div>
<div style="position:absolute;left:936px;top:73px;width:964px;height:74px;background:#181818;"></div>
<div style="position:absolute;left:936px;top:145px;width:964px;height:2px;background:#2b2b2b;"></div>
<div style="position:absolute;left:936px;top:73px;width:272px;height:74px;background:#1f1f1f;"></div>
<div style="position:absolute;left:936px;top:73px;width:272px;height:2px;background:#0078d4;"></div>
<div style="position:absolute;left:1208px;top:73px;width:2px;height:74px;background:#2b2b2b;"></div>
<svg style="position:absolute;left:969px;top:101px;" width="20" height="20" viewBox="0 0 20 20" fill="none"><path d="M10.0 1 3.6 19M18.4 1 12.0 19" stroke="#519aba" stroke-width="3.6"/><path d="M1 6.8H19.5M0.5 13.6H19" stroke="#519aba" stroke-width="3.6"/></svg>
<div style="position:absolute;left:1004px;top:93.90px;font-family:'Liberation Sans', sans-serif;font-size:28.2px;line-height:36.66px;color:#e2c08d;white-space:pre;font-style:italic;transform:scaleX(0.8840);transform-origin:0 0;">styles.css</div>
<div style="position:absolute;left:1124px;top:96.09px;font-family:'Liberation Sans', sans-serif;font-size:26px;line-height:33.8px;color:#b39a74;white-space:pre;font-weight:700;transform:scaleX(1.0613);transform-origin:0 0;">M</div>
<svg style="position:absolute;left:1168px;top:99px;" width="22" height="22" viewBox="0 0 22 22" fill="none"><path d="M1.5 1.5 20.5 20.5M20.5 1.5 1.5 20.5" stroke="#ffffff" stroke-width="2.6"/></svg>
<svg style="position:absolute;left:1551.6px;top:92px;" width="36" height="36" viewBox="0 0 36 36" fill="none"><path d="M18 18L35.82 20.51" stroke="#d97757" stroke-width="3.6" stroke-linecap="round"/><path d="M18 18L29.35 26.87" stroke="#d97757" stroke-width="3.6" stroke-linecap="round"/><path d="M18 18L24.41 33.85" stroke="#d97757" stroke-width="3.6" stroke-linecap="round"/><path d="M18 18L16.12 31.37" stroke="#d97757" stroke-width="3.6" stroke-linecap="round"/><path d="M18 18L6.92 32.18" stroke="#d97757" stroke-width="3.6" stroke-linecap="round"/><path d="M18 18L3.81 23.73" stroke="#d97757" stroke-width="3.6" stroke-linecap="round"/><path d="M18 18L1.96 15.75" stroke="#d97757" stroke-width="3.6" stroke-linecap="round"/><path d="M18 18L6.94 9.36" stroke="#d97757" stroke-width="3.6" stroke-linecap="round"/><path d="M18 18L11.26 1.31" stroke="#d97757" stroke-width="3.6" stroke-linecap="round"/><path d="M18 18L20.05 3.38" stroke="#d97757" stroke-width="3.6" stroke-linecap="round"/><path d="M18 18L28.20 4.95" stroke="#d97757" stroke-width="3.6" stroke-linecap="round"/><path d="M18 18L31.35 12.61" stroke="#d97757" stroke-width="3.6" stroke-linecap="round"/></svg>
<svg style="position:absolute;left:1607px;top:92px;" width="37" height="37" viewBox="0 0 24 24" fill="none"><path d="M22.282 9.821a5.985 5.985 0 0 0-.516-4.91 6.046 6.046 0 0 0-6.51-2.9A6.065 6.065 0 0 0 4.981 4.18a5.985 5.985 0 0 0-3.998 2.9 6.046 6.046 0 0 0 .743 7.097 5.98 5.98 0 0 0 .51 4.911 6.051 6.051 0 0 0 6.515 2.9A5.985 5.985 0 0 0 13.26 24a6.056 6.056 0 0 0 5.772-4.206 5.99 5.99 0 0 0 3.997-2.9 6.056 6.056 0 0 0-.747-7.073zM13.26 22.43a4.476 4.476 0 0 1-2.876-1.04l.141-.081 4.779-2.758a.795.795 0 0 0 .392-.681v-6.737l2.02 1.168a.071.071 0 0 1 .038.052v5.583a4.504 4.504 0 0 1-4.494 4.494zM3.6 18.304a4.47 4.47 0 0 1-.535-3.014l.142.085 4.783 2.759a.771.771 0 0 0 .78 0l5.843-3.369v2.332a.08.08 0 0 1-.033.062L9.74 19.95a4.5 4.5 0 0 1-6.14-1.646zM2.34 7.896a4.485 4.485 0 0 1 2.366-1.973V11.6a.766.766 0 0 0 .388.676l5.815 3.355-2.02 1.168a.076.076 0 0 1-.071 0l-4.83-2.786A4.504 4.504 0 0 1 2.34 7.872zm16.597 3.855l-5.833-3.387L15.119 7.2a.076.076 0 0 1 .071 0l4.83 2.791a4.494 4.494 0 0 1-.676 8.105v-5.678a.79.79 0 0 0-.407-.667zm2.01-3.023l-.141-.085-4.774-2.782a.776.776 0 0 0-.785 0L9.409 9.23V6.897a.066.066 0 0 1 .028-.061l4.83-2.787a4.5 4.5 0 0 1 6.68 4.66zm-12.64 4.135l-2.02-1.164a.08.08 0 0 1-.038-.057V6.075a4.5 4.5 0 0 1 7.375-3.453l-.142.08L8.704 5.46a.795.795 0 0 0-.393.681zm1.097-2.365l2.602-1.5 2.607 1.5v2.999l-2.597 1.5-2.607-1.5z" fill="#ffffff"/></svg>
<svg style="position:absolute;left:1670px;top:94px;" width="24" height="34" viewBox="0 0 24 34" fill="none"><path d="M3 3.5h18M12 3.5v27M3.5 21.5l8.5 9 8.5-9" stroke="#cccccc" stroke-width="2.4" stroke-linejoin="round" stroke-linecap="round"/></svg>
<svg style="position:absolute;left:1720px;top:91px;" width="36" height="36" viewBox="0 0 36 36" fill="none"><circle cx="8" cy="8" r="5.5" stroke="#cccccc" stroke-width="2.4"/><circle cx="28" cy="28" r="5.5" stroke="#cccccc" stroke-width="2.4"/><path d="M8 13.5v8a5 5 0 0 0 5 5h6M15.5 22.5l4 4-4 4M28 22.5v-8a5 5 0 0 0-5-5h-6M20.5 13.5l-4-4 4-4" stroke="#cccccc" stroke-width="2.4" stroke-linecap="round" stroke-linejoin="round"/></svg>
<svg style="position:absolute;left:1776px;top:92px;" width="36" height="35" viewBox="0 0 36 35" fill="none"><rect x="2.5" y="2.5" width="30" height="29" rx="5" stroke="#cccccc" stroke-width="2.4"/><path d="M17.5 2.5v29" stroke="#cccccc" stroke-width="2.4"/></svg>
<svg style="position:absolute;left:1840px;top:106.6px;" width="23" height="5" viewBox="0 0 23 5" fill="none"><circle cx="2.4" cy="2.4" r="2.4" fill="#cccccc"/><circle cx="11.4" cy="2.4" r="2.4" fill="#cccccc"/><circle cx="20.4" cy="2.4" r="2.4" fill="#cccccc"/></svg>
<svg style="position:absolute;left:982px;top:162px;" width="19" height="19" viewBox="0 0 19 19" fill="none"><path d="M9.5 1 3.4 18M17.5 1 11.4 18" stroke="#519aba" stroke-width="3.6"/><path d="M1 6.5H18.5M0.5 12.9H18" stroke="#519aba" stroke-width="3.6"/></svg>
<div style="position:absolute;left:1018px;top:154.90px;font-family:'Liberation Sans', sans-serif;font-size:28.2px;line-height:36.66px;color:#a9a9a9;white-space:pre;transform:scaleX(0.9004);transform-origin:0 0;">styles.css</div>
<svg style="position:absolute;left:1140px;top:162px;" width="16" height="26" viewBox="0 0 16 26" fill="none"><path d="M3 2l10 11L3 24" stroke="#a9a9a9" stroke-width="2.4" stroke-linecap="round" stroke-linejoin="round"/></svg>
<svg style="position:absolute;left:1165px;top:179.2px;" width="19" height="4" viewBox="0 0 19 4" fill="none"><circle cx="1.8" cy="1.8" r="1.8" fill="#a9a9a9"/><circle cx="9.3" cy="1.8" r="1.8" fill="#a9a9a9"/><circle cx="16.8" cy="1.8" r="1.8" fill="#a9a9a9"/></svg>
<div style="position:absolute;left:936px;top:196px;width:964px;height:597px;overflow:hidden;">
<div style="position:absolute;left:-936px;top:-196px;width:2861px;height:1837px;">
<div style="position:absolute;left:995.14px;top:233.61px;font-family:'Liberation Mono', monospace;font-size:27.7px;line-height:36.01px;color:#6e7681;white-space:pre;">641</div>
<div style="position:absolute;left:1099.5px;top:233.61px;font-family:'Liberation Mono', monospace;font-size:27.7px;line-height:36.01px;color:#cccccc;white-space:pre;"><span style="color:#9cdcfe">  align-items</span><span style="color:#cccccc">: </span><span style="color:#ce9178">center</span><span style="color:#cccccc">;</span></div>
<div style="position:absolute;left:995.14px;top:274.61px;font-family:'Liberation Mono', monospace;font-size:27.7px;line-height:36.01px;color:#6e7681;white-space:pre;">642</div>
<div style="position:absolute;left:1099.5px;top:274.61px;font-family:'Liberation Mono', monospace;font-size:27.7px;line-height:36.01px;color:#cccccc;white-space:pre;"><span style="color:#9cdcfe">  justify-content</span><span style="color:#cccccc">: </span><span style="color:#ce9178">center</span><span style="color:#cccccc">;</span></div>
<div style="position:absolute;left:995.14px;top:315.61px;font-family:'Liberation Mono', monospace;font-size:27.7px;line-height:36.01px;color:#6e7681;white-space:pre;">643</div>
<div style="position:absolute;left:1099.5px;top:315.61px;font-family:'Liberation Mono', monospace;font-size:27.7px;line-height:36.01px;color:#cccccc;white-space:pre;"><span style="color:#9cdcfe">  gap</span><span style="color:#cccccc">: </span><span style="color:#b5cea8">10px</span><span style="color:#cccccc">;</span></div>
<div style="position:absolute;left:995.14px;top:356.61px;font-family:'Liberation Mono', monospace;font-size:27.7px;line-height:36.01px;color:#6e7681;white-space:pre;">644</div>
<div style="position:absolute;left:1099.5px;top:356.61px;font-family:'Liberation Mono', monospace;font-size:27.7px;line-height:36.01px;color:#cccccc;white-space:pre;"><span style="color:#9cdcfe">  margin-top</span><span style="color:#cccccc">: </span><span style="color:#b5cea8">0</span><span style="color:#cccccc">;</span></div>
<div style="position:absolute;left:995.14px;top:397.61px;font-family:'Liberation Mono', monospace;font-size:27.7px;line-height:36.01px;color:#6e7681;white-space:pre;">645</div>
<div style="position:absolute;left:1099.5px;top:397.61px;font-family:'Liberation Mono', monospace;font-size:27.7px;line-height:36.01px;color:#cccccc;white-space:pre;"><span style="color:#9cdcfe">  padding</span><span style="color:#cccccc">: </span><span style="color:#b5cea8">18px 26px</span><span style="color:#cccccc">;</span></div>
<div style="position:absolute;left:995.14px;top:438.61px;font-family:'Liberation Mono', monospace;font-size:27.7px;line-height:36.01px;color:#6e7681;white-space:pre;">646</div>
<div style="position:absolute;left:1099.5px;top:438.61px;font-family:'Liberation Mono', monospace;font-size:27.7px;line-height:36.01px;color:#cccccc;white-space:pre;"><span style="color:#9cdcfe">  border</span><span style="color:#cccccc">: </span><span style="color:#b5cea8">1px </span><span style="color:#ce9178">solid </span><span style="display:inline-block;width:36px;height:1px;position:relative;"><span style="position:absolute;left:7px;top:-24px;width:24px;height:24px;box-sizing:border-box;border:3px solid #ffffff;background:#3d3428;"></span></span><span style="color:#dcdcaa">rgba</span><span style="color:#da70d6">(</span><span style="color:#b5cea8">157</span><span style="color:#cccccc">, </span><span style="color:#b5cea8">126</span><span style="color:#cccccc">, </span><span style="color:#b5cea8">81</span><span style="color:#cccccc">, </span><span style="color:#b5cea8">0.24</span><span style="color:#da70d6">)</span><span style="color:#cccccc">;</span></div>
<div style="position:absolute;left:995.14px;top:479.61px;font-family:'Liberation Mono', monospace;font-size:27.7px;line-height:36.01px;color:#6e7681;white-space:pre;">647</div>
<div style="position:absolute;left:1099.5px;top:479.61px;font-family:'Liberation Mono', monospace;font-size:27.7px;line-height:36.01px;color:#cccccc;white-space:pre;"><span style="color:#9cdcfe">  border-radius</span><span style="color:#cccccc">: </span><span style="color:#b5cea8">12px</span><span style="color:#cccccc">;</span></div>
<div style="position:absolute;left:995.14px;top:520.61px;font-family:'Liberation Mono', monospace;font-size:27.7px;line-height:36.01px;color:#6e7681;white-space:pre;">648</div>
<div style="position:absolute;left:1099.5px;top:520.61px;font-family:'Liberation Mono', monospace;font-size:27.7px;line-height:36.01px;color:#cccccc;white-space:pre;"><span style="color:#9cdcfe">  color</span><span style="color:#cccccc">: </span><span style="display:inline-block;width:36px;height:1px;position:relative;"><span style="position:absolute;left:7px;top:-24px;width:24px;height:24px;box-sizing:border-box;border:3px solid #ffffff;background:#e6a83c;"></span></span><span style="color:#dcdcaa">rgba</span><span style="color:#da70d6">(</span><span style="color:#b5cea8">244</span><span style="color:#cccccc">, </span><span style="color:#b5cea8">182</span><span style="color:#cccccc">, </span><span style="color:#b5cea8">67</span><span style="color:#cccccc">, </span><span style="color:#b5cea8">0.92</span><span style="color:#da70d6">)</span><span style="color:#cccccc">;</span></div>
<div style="position:absolute;left:995.14px;top:561.61px;font-family:'Liberation Mono', monospace;font-size:27.7px;line-height:36.01px;color:#6e7681;white-space:pre;">649</div>
<div style="position:absolute;left:1099.5px;top:561.61px;font-family:'Liberation Mono', monospace;font-size:27.7px;line-height:36.01px;color:#cccccc;white-space:pre;"><span style="color:#9cdcfe">  text-decoration</span><span style="color:#cccccc">: </span><span style="color:#ce9178">none</span><span style="color:#cccccc">;</span></div>
<div style="position:absolute;left:995.14px;top:602.61px;font-family:'Liberation Mono', monospace;font-size:27.7px;line-height:36.01px;color:#6e7681;white-space:pre;">650</div>
<div style="position:absolute;left:1099.5px;top:602.61px;font-family:'Liberation Mono', monospace;font-size:27.7px;line-height:36.01px;color:#cccccc;white-space:pre;"><span style="color:#9cdcfe">  font-family</span><span style="color:#cccccc">: </span><span style="color:#dcdcaa">var</span><span style="color:#da70d6">(</span><span style="color:#9cdcfe">--font-body</span><span style="color:#da70d6">)</span><span style="color:#cccccc">;</span></div>
<div style="position:absolute;left:995.14px;top:643.61px;font-family:'Liberation Mono', monospace;font-size:27.7px;line-height:36.01px;color:#6e7681;white-space:pre;">651</div>
<div style="position:absolute;left:1099.5px;top:643.61px;font-family:'Liberation Mono', monospace;font-size:27.7px;line-height:36.01px;color:#cccccc;white-space:pre;"><span style="color:#9cdcfe">  font-weight</span><span style="color:#cccccc">: </span><span style="color:#b5cea8">500</span><span style="color:#cccccc">;</span></div>
<div style="position:absolute;left:995.14px;top:684.61px;font-family:'Liberation Mono', monospace;font-size:27.7px;line-height:36.01px;color:#6e7681;white-space:pre;">652</div>
<div style="position:absolute;left:1099.5px;top:684.61px;font-family:'Liberation Mono', monospace;font-size:27.7px;line-height:36.01px;color:#cccccc;white-space:pre;"><span style="color:#9cdcfe">  font-size</span><span style="color:#cccccc">: </span><span style="color:#dcdcaa">var</span><span style="color:#da70d6">(</span><span style="color:#9cdcfe">--type-button</span><span style="color:#da70d6">)</span><span style="color:#cccccc">;</span></div>
<div style="position:absolute;left:995.14px;top:725.61px;font-family:'Liberation Mono', monospace;font-size:27.7px;line-height:36.01px;color:#6e7681;white-space:pre;">653</div>
<div style="position:absolute;left:1099.5px;top:725.61px;font-family:'Liberation Mono', monospace;font-size:27.7px;line-height:36.01px;color:#cccccc;white-space:pre;"><span style="color:#9cdcfe">  line-height</span><span style="color:#cccccc">: </span><span style="color:#b5cea8">1.23</span><span style="color:#cccccc">;</span></div>
<div style="position:absolute;left:995.14px;top:766.61px;font-family:'Liberation Mono', monospace;font-size:27.7px;line-height:36.01px;color:#6e7681;white-space:pre;">654</div>
<div style="position:absolute;left:1099.5px;top:766.61px;font-family:'Liberation Mono', monospace;font-size:27.7px;line-height:36.01px;color:#cccccc;white-space:pre;"><span style="color:#9cdcfe">  letter-spacing</span><span style="color:#cccccc">: </span><span style="color:#b5cea8">0.028em</span><span style="color:#cccccc">;</span></div>
<div style="position:absolute;left:1101px;top:237px;width:2px;height:560px;background:#404040;"></div>
</div></div>
<div style="position:absolute;left:936px;top:196px;width:964px;height:41px;background:#1f1f1f;"></div>
<div style="position:absolute;left:995.14px;top:200.61px;font-family:'Liberation Mono', monospace;font-size:27.7px;line-height:36.01px;color:#6e7681;white-space:pre;">639</div>
<div style="position:absolute;left:1099.5px;top:200.61px;font-family:'Liberation Mono', monospace;font-size:27.7px;line-height:36.01px;color:#cccccc;white-space:pre;"><span style="color:#d7ba7d">.hero-cta </span><span style="color:#ffd700">{</span></div>
<div style="position:absolute;left:1768px;top:196px;width:101px;height:597px;background:rgba(31,31,31,0.82);"></div>
<div style="position:absolute;left:1777px;top:199px;width:92px;height:594px;overflow:hidden;"><div style="position:absolute;left:0;top:0;font-family:'Liberation Mono',monospace;font-size:13px;line-height:15.600px;white-space:pre;transform:scale(0.2538);transform-origin:0 0;font-weight:700;"><span style="color:#000"></span><span style="color:#d7ba7d">html.is-hero-intro-active .hero-copy-item {</span>
<span style="color:#000">  </span><span style="color:#9cdcfe">transform</span><span style="color:#cccccc">:</span><span style="color:#cccccc"> </span><span style="color:#dcdcaa">translate3d</span><span style="color:#cccccc">(</span><span style="color:#b5cea8">0</span><span style="color:#cccccc">, </span><span style="color:#b5cea8">0</span><span style="color:#cccccc">, </span><span style="color:#b5cea8">0</span><span style="color:#cccccc">);</span>
<span style="color:#000">  </span><span style="color:#9cdcfe">opacity</span><span style="color:#cccccc">:</span><span style="color:#cccccc"> </span><span style="color:#b5cea8">1</span><span style="color:#cccccc">;</span>
<span style="color:#000"></span><span style="color:#cccccc">}</span>

<span style="color:#000"></span><span style="color:#d7ba7d">.hero-text h1 {</span>
<span style="color:#000">  </span><span style="color:#9cdcfe">margin</span><span style="color:#cccccc">:</span><span style="color:#cccccc"> -</span><span style="color:#b5cea8">2px</span><span style="color:#cccccc"> </span><span style="color:#b5cea8">0</span><span style="color:#cccccc"> </span><span style="color:#b5cea8">0</span><span style="color:#cccccc">;</span>
<span style="color:#000">  </span><span style="color:#9cdcfe">color</span><span style="color:#cccccc">:</span><span style="color:#cccccc"> #</span><span style="color:#ce9178">ffffff</span><span style="color:#cccccc">;</span>
<span style="color:#000">  </span><span style="color:#9cdcfe">font-family</span><span style="color:#cccccc">:</span><span style="color:#cccccc"> </span><span style="color:#ce9178">"acumin-pro-semi-condensed"</span><span style="color:#cccccc">, </span><span style="color:#ce9178">"Helvetica"</span><span style="color:#cccccc">;</span>
<span style="color:#000">  </span><span style="color:#9cdcfe">font-weight</span><span style="color:#cccccc">:</span><span style="color:#cccccc"> </span><span style="color:#b5cea8">700</span><span style="color:#cccccc">;</span>
<span style="color:#000">  </span><span style="color:#9cdcfe">font-size</span><span style="color:#cccccc">:</span><span style="color:#cccccc"> </span><span style="color:#dcdcaa">var</span><span style="color:#cccccc">(--</span><span style="color:#ce9178">type-hero-title</span><span style="color:#cccccc">);</span>
<span style="color:#000">  </span><span style="color:#9cdcfe">line-height</span><span style="color:#cccccc">:</span><span style="color:#cccccc"> </span><span style="color:#b5cea8">1.088</span><span style="color:#cccccc">;</span>
<span style="color:#000">  </span><span style="color:#9cdcfe">letter-spacing</span><span style="color:#cccccc">:</span><span style="color:#cccccc"> </span><span style="color:#b5cea8">0.5px</span><span style="color:#cccccc">;</span>
<span style="color:#000"></span><span style="color:#cccccc">}</span>

<span style="color:#000"></span><span style="color:#d7ba7d">.hero-subhead {</span>
<span style="color:#000">  </span><span style="color:#9cdcfe">margin</span><span style="color:#cccccc">:</span><span style="color:#cccccc"> -</span><span style="color:#b5cea8">12px</span><span style="color:#cccccc"> </span><span style="color:#b5cea8">0</span><span style="color:#cccccc"> </span><span style="color:#b5cea8">0</span><span style="color:#cccccc">;</span>
<span style="color:#000">  </span><span style="color:#9cdcfe">color</span><span style="color:#cccccc">:</span><span style="color:#cccccc"> #</span><span style="color:#ce9178">ffffff</span><span style="color:#cccccc">;</span>
<span style="color:#000">  </span><span style="color:#9cdcfe">font-family</span><span style="color:#cccccc">:</span><span style="color:#cccccc"> </span><span style="color:#ce9178">"acumin-pro-semi-condensed"</span><span style="color:#cccccc">, </span><span style="color:#ce9178">"Helvetica"</span><span style="color:#cccccc">;</span>
<span style="color:#000">  </span><span style="color:#9cdcfe">font-weight</span><span style="color:#cccccc">:</span><span style="color:#cccccc"> </span><span style="color:#b5cea8">400</span><span style="color:#cccccc">;</span>
<span style="color:#000">  </span><span style="color:#9cdcfe">font-size</span><span style="color:#cccccc">:</span><span style="color:#cccccc"> </span><span style="color:#dcdcaa">var</span><span style="color:#cccccc">(--</span><span style="color:#ce9178">type-hero-subhead</span><span style="color:#cccccc">);</span>
<span style="color:#000">  </span><span style="color:#9cdcfe">line-height</span><span style="color:#cccccc">:</span><span style="color:#cccccc"> </span><span style="color:#b5cea8">1.2</span><span style="color:#cccccc">;</span>
<span style="color:#000"></span><span style="color:#cccccc">}</span>

<span style="color:#000"></span><span style="color:#d7ba7d">.hero-cta {</span>
<span style="color:#000">  </span><span style="color:#9cdcfe">display</span><span style="color:#cccccc">:</span><span style="color:#cccccc"> </span><span style="color:#ce9178">inline-flex</span><span style="color:#cccccc">;</span>
<span style="color:#000">  </span><span style="color:#9cdcfe">align-items</span><span style="color:#cccccc">:</span><span style="color:#cccccc"> </span><span style="color:#ce9178">center</span><span style="color:#cccccc">;</span>
<span style="color:#000">  </span><span style="color:#9cdcfe">justify-content</span><span style="color:#cccccc">:</span><span style="color:#cccccc"> </span><span style="color:#ce9178">center</span><span style="color:#cccccc">;</span>
<span style="color:#000">  </span><span style="color:#9cdcfe">gap</span><span style="color:#cccccc">:</span><span style="color:#cccccc"> </span><span style="color:#b5cea8">10px</span><span style="color:#cccccc">;</span>
<span style="color:#000">  </span><span style="color:#9cdcfe">margin-top</span><span style="color:#cccccc">:</span><span style="color:#cccccc"> </span><span style="color:#b5cea8">0</span><span style="color:#cccccc">;</span>
<span style="color:#000">  </span><span style="color:#9cdcfe">padding</span><span style="color:#cccccc">:</span><span style="color:#cccccc"> </span><span style="color:#b5cea8">18px</span><span style="color:#cccccc"> </span><span style="color:#b5cea8">26px</span><span style="color:#cccccc">;</span>
<span style="color:#000">  </span><span style="color:#9cdcfe">border</span><span style="color:#cccccc">:</span><span style="color:#cccccc"> </span><span style="color:#b5cea8">1px</span><span style="color:#cccccc"> </span><span style="color:#ce9178">solid</span><span style="color:#cccccc"> </span><span style="color:#dcdcaa">rgba</span><span style="color:#cccccc">(</span><span style="color:#b5cea8">157</span><span style="color:#cccccc">, </span><span style="color:#b5cea8">126</span><span style="color:#cccccc">, </span><span style="color:#b5cea8">81</span><span style="color:#cccccc">, </span><span style="color:#b5cea8">0.24</span><span style="color:#cccccc">);</span>
<span style="color:#000">  </span><span style="color:#9cdcfe">border-radius</span><span style="color:#cccccc">:</span><span style="color:#cccccc"> </span><span style="color:#b5cea8">12px</span><span style="color:#cccccc">;</span>
<span style="color:#000">  </span><span style="color:#9cdcfe">color</span><span style="color:#cccccc">:</span><span style="color:#cccccc"> </span><span style="color:#dcdcaa">rgba</span><span style="color:#cccccc">(</span><span style="color:#b5cea8">244</span><span style="color:#cccccc">, </span><span style="color:#b5cea8">182</span><span style="color:#cccccc">, </span><span style="color:#b5cea8">67</span><span style="color:#cccccc">, </span><span style="color:#b5cea8">0.92</span><span style="color:#cccccc">);</span>
<span style="color:#000">  </span><span style="color:#9cdcfe">text-decoration</span><span style="color:#cccccc">:</span><span style="color:#cccccc"> </span><span style="color:#ce9178">none</span><span style="color:#cccccc">;</span>
<span style="color:#000">  </span><span style="color:#9cdcfe">font-family</span><span style="color:#cccccc">:</span><span style="color:#cccccc"> </span><span style="color:#dcdcaa">var</span><span style="color:#cccccc">(--</span><span style="color:#ce9178">font-body</span><span style="color:#cccccc">);</span>
<span style="color:#000">  </span><span style="color:#9cdcfe">font-weight</span><span style="color:#cccccc">:</span><span style="color:#cccccc"> </span><span style="color:#b5cea8">500</span><span style="color:#cccccc">;</span>
<span style="color:#000">  </span><span style="color:#9cdcfe">font-size</span><span style="color:#cccccc">:</span><span style="color:#cccccc"> </span><span style="color:#dcdcaa">var</span><span style="color:#cccccc">(--</span><span style="color:#ce9178">type-button</span><span style="color:#cccccc">);</span>
<span style="color:#000">  </span><span style="color:#9cdcfe">line-height</span><span style="color:#cccccc">:</span><span style="color:#cccccc"> </span><span style="color:#b5cea8">1.23</span><span style="color:#cccccc">;</span>
<span style="color:#000">  </span><span style="color:#9cdcfe">letter-spacing</span><span style="color:#cccccc">:</span><span style="color:#cccccc"> </span><span style="color:#b5cea8">0.028em</span><span style="color:#cccccc">;</span>
<span style="color:#000">  </span><span style="color:#9cdcfe">text-transform</span><span style="color:#cccccc">:</span><span style="color:#cccccc"> </span><span style="color:#ce9178">none</span><span style="color:#cccccc">;</span>
<span style="color:#000">  </span><span style="color:#9cdcfe">background</span><span style="color:#cccccc">:</span>
<span style="color:#000">    </span><span style="color:#dcdcaa">linear-gradient</span><span style="color:#cccccc">(</span>
<span style="color:#000">      </span><span style="color:#ce9178">to</span><span style="color:#cccccc"> </span><span style="color:#ce9178">bottom</span><span style="color:#cccccc">,</span>
<span style="color:#000">      </span><span style="color:#dcdcaa">rgba</span><span style="color:#cccccc">(</span><span style="color:#b5cea8">250</span><span style="color:#cccccc">, </span><span style="color:#b5cea8">233</span><span style="color:#cccccc">, </span><span style="color:#b5cea8">202</span><span style="color:#cccccc">, </span><span style="color:#b5cea8">0.1</span><span style="color:#cccccc">) </span><span style="color:#b5cea8">0%</span><span style="color:#cccccc">,</span>
<span style="color:#000">      </span><span style="color:#dcdcaa">rgba</span><span style="color:#cccccc">(</span><span style="color:#b5cea8">250</span><span style="color:#cccccc">, </span><span style="color:#b5cea8">233</span><span style="color:#cccccc">, </span><span style="color:#b5cea8">202</span><span style="color:#cccccc">, </span><span style="color:#b5cea8">0.032</span><span style="color:#cccccc">) </span><span style="color:#b5cea8">52%</span><span style="color:#cccccc">,</span>
<span style="color:#000">      </span><span style="color:#dcdcaa">rgba</span><span style="color:#cccccc">(</span><span style="color:#b5cea8">250</span><span style="color:#cccccc">, </span><span style="color:#b5cea8">233</span><span style="color:#cccccc">, </span><span style="color:#b5cea8">202</span><span style="color:#cccccc">, </span><span style="color:#b5cea8">0</span><span style="color:#cccccc">) </span><span style="color:#b5cea8">100%</span>
<span style="color:#000">    </span><span style="color:#cccccc">),</span>
<span style="color:#000">    </span><span style="color:#dcdcaa">radial-gradient</span><span style="color:#cccccc">(</span>
<span style="color:#000">      </span><span style="color:#b5cea8">115%</span><span style="color:#cccccc"> </span><span style="color:#b5cea8">100%</span><span style="color:#cccccc"> </span><span style="color:#ce9178">at</span><span style="color:#cccccc"> </span><span style="color:#b5cea8">0%</span><span style="color:#cccccc"> </span><span style="color:#b5cea8">0%</span><span style="color:#cccccc">,</span>
<span style="color:#000">      </span><span style="color:#dcdcaa">rgba</span><span style="color:#cccccc">(</span><span style="color:#b5cea8">244</span><span style="color:#cccccc">, </span><span style="color:#b5cea8">182</span><span style="color:#cccccc">, </span><span style="color:#b5cea8">67</span><span style="color:#cccccc">, </span><span style="color:#b5cea8">0.082</span><span style="color:#cccccc">) </span><span style="color:#b5cea8">0%</span><span style="color:#cccccc">,</span>
<span style="color:#000">      </span><span style="color:#dcdcaa">rgba</span><span style="color:#cccccc">(</span><span style="color:#b5cea8">244</span><span style="color:#cccccc">, </span><span style="color:#b5cea8">182</span><span style="color:#cccccc">, </span><span style="color:#b5cea8">67</span><span style="color:#cccccc">, </span><span style="color:#b5cea8">0.022</span><span style="color:#cccccc">) </span><span style="color:#b5cea8">34%</span><span style="color:#cccccc">,</span>
<span style="color:#000">      </span><span style="color:#dcdcaa">rgba</span><span style="color:#cccccc">(</span><span style="color:#b5cea8">244</span><span style="color:#cccccc">, </span><span style="color:#b5cea8">182</span><span style="color:#cccccc">, </span><span style="color:#b5cea8">67</span><span style="color:#cccccc">, </span><span style="color:#b5cea8">0</span><span style="color:#cccccc">) </span><span style="color:#b5cea8">66%</span>
<span style="color:#000">    </span><span style="color:#cccccc">),</span>
<span style="color:#000">    </span><span style="color:#dcdcaa">radial-gradient</span><span style="color:#cccccc">(</span>
<span style="color:#000">      </span><span style="color:#b5cea8">115%</span><span style="color:#cccccc"> </span><span style="color:#b5cea8">100%</span><span style="color:#cccccc"> </span><span style="color:#ce9178">at</span><span style="color:#cccccc"> </span><span style="color:#b5cea8">100%</span><span style="color:#cccccc"> </span><span style="color:#b5cea8">0%</span><span style="color:#cccccc">,</span>
<span style="color:#000">      </span><span style="color:#dcdcaa">rgba</span><span style="color:#cccccc">(</span><span style="color:#b5cea8">244</span><span style="color:#cccccc">, </span><span style="color:#b5cea8">182</span><span style="color:#cccccc">, </span><span style="color:#b5cea8">67</span><span style="color:#cccccc">, </span><span style="color:#b5cea8">0.078</span><span style="color:#cccccc">) </span><span style="color:#b5cea8">0%</span><span style="color:#cccccc">,</span>
<span style="color:#000">      </span><span style="color:#dcdcaa">rgba</span><span style="color:#cccccc">(</span><span style="color:#b5cea8">244</span><span style="color:#cccccc">, </span><span style="color:#b5cea8">182</span><span style="color:#cccccc">, </span><span style="color:#b5cea8">67</span><span style="color:#cccccc">, </span><span style="color:#b5cea8">0.02</span><span style="color:#cccccc">) </span><span style="color:#b5cea8">36%</span><span style="color:#cccccc">,</span>
<span style="color:#000">      </span><span style="color:#dcdcaa">rgba</span><span style="color:#cccccc">(</span><span style="color:#b5cea8">244</span><span style="color:#cccccc">, </span><span style="color:#b5cea8">182</span><span style="color:#cccccc">, </span><span style="color:#b5cea8">67</span><span style="color:#cccccc">, </span><span style="color:#b5cea8">0</span><span style="color:#cccccc">) </span><span style="color:#b5cea8">67%</span>
<span style="color:#000">    </span><span style="color:#cccccc">),</span>
<span style="color:#000">    </span><span style="color:#dcdcaa">radial-gradient</span><span style="color:#cccccc">(</span>
<span style="color:#000">      </span><span style="color:#b5cea8">100%</span><span style="color:#cccccc"> </span><span style="color:#b5cea8">120%</span><span style="color:#cccccc"> </span><span style="color:#ce9178">at</span><span style="color:#cccccc"> </span><span style="color:#b5cea8">50%</span><span style="color:#cccccc"> </span><span style="color:#b5cea8">110%</span><span style="color:#cccccc">,</span>
<span style="color:#000">      </span><span style="color:#dcdcaa">rgba</span><span style="color:#cccccc">(</span><span style="color:#b5cea8">180</span><span style="color:#cccccc">, </span><span style="color:#b5cea8">132</span><span style="color:#cccccc">, </span><span style="color:#b5cea8">58</span><span style="color:#cccccc">, </span><span style="color:#b5cea8">0.05</span><span style="color:#cccccc">) </span><span style="color:#b5cea8">0%</span><span style="color:#cccccc">,</span>
<span style="color:#000">      </span><span style="color:#dcdcaa">rgba</span><span style="color:#cccccc">(</span><span style="color:#b5cea8">180</span><span style="color:#cccccc">, </span><span style="color:#b5cea8">132</span><span style="color:#cccccc">, </span><span style="color:#b5cea8">58</span><span style="color:#cccccc">, </span><span style="color:#b5cea8">0.018</span><span style="color:#cccccc">) </span><span style="color:#b5cea8">36%</span><span style="color:#cccccc">,</span>
<span style="color:#000">      </span><span style="color:#dcdcaa">rgba</span><span style="color:#cccccc">(</span><span style="color:#b5cea8">180</span><span style="color:#cccccc">, </span><span style="color:#b5cea8">132</span><span style="color:#cccccc">, </span><span style="color:#b5cea8">58</span><span style="color:#cccccc">, </span><span style="color:#b5cea8">0</span><span style="color:#cccccc">) </span><span style="color:#b5cea8">66%</span>
<span style="color:#000">    </span><span style="color:#cccccc">),</span>
<span style="color:#000">    </span><span style="color:#dcdcaa">linear-gradient</span><span style="color:#cccccc">(</span>
<span style="color:#000">      </span><span style="color:#b5cea8">180deg</span><span style="color:#cccccc">,</span>
<span style="color:#000">      </span><span style="color:#dcdcaa">rgba</span><span style="color:#cccccc">(</span><span style="color:#b5cea8">28</span><span style="color:#cccccc">, </span><span style="color:#b5cea8">24</span><span style="color:#cccccc">, </span><span style="color:#b5cea8">18</span><span style="color:#cccccc">, </span><span style="color:#b5cea8">0.22</span><span style="color:#cccccc">) </span><span style="color:#b5cea8">0%</span><span style="color:#cccccc">,</span>
<span style="color:#000">      </span><span style="color:#dcdcaa">rgba</span><span style="color:#cccccc">(</span><span style="color:#b5cea8">15</span><span style="color:#cccccc">, </span><span style="color:#b5cea8">18</span><span style="color:#cccccc">, </span><span style="color:#b5cea8">24</span><span style="color:#cccccc">, </span><span style="color:#b5cea8">0.38</span><span style="color:#cccccc">) </span><span style="color:#b5cea8">100%</span>
<span style="color:#000">    </span><span style="color:#cccccc">);</span>
<span style="color:#000">  </span><span style="color:#9cdcfe">box-shadow</span><span style="color:#cccccc">:</span>
<span style="color:#000">    </span><span style="color:#ce9178">inset</span><span style="color:#cccccc"> </span><span style="color:#b5cea8">0</span><span style="color:#cccccc"> </span><span style="color:#b5cea8">1px</span><span style="color:#cccccc"> </span><span style="color:#b5cea8">0</span><span style="color:#cccccc"> </span><span style="color:#dcdcaa">rgba</span><span style="color:#cccccc">(</span><span style="color:#b5cea8">255</span><span style="color:#cccccc">, </span><span style="color:#b5cea8">240</span><span style="color:#cccccc">, </span><span style="color:#b5cea8">215</span><span style="color:#cccccc">, </span><span style="color:#b5cea8">0.12</span><span style="color:#cccccc">),</span>
<span style="color:#000">    </span><span style="color:#ce9178">inset</span><span style="color:#cccccc"> </span><span style="color:#b5cea8">0</span><span style="color:#cccccc"> -</span><span style="color:#b5cea8">1px</span><span style="color:#cccccc"> </span><span style="color:#b5cea8">0</span><span style="color:#cccccc"> </span><span style="color:#dcdcaa">rgba</span><span style="color:#cccccc">(</span><span style="color:#b5cea8">124</span><span style="color:#cccccc">, </span><span style="color:#b5cea8">90</span><span style="color:#cccccc">, </span><span style="color:#b5cea8">50</span><span style="color:#cccccc">, </span><span style="color:#b5cea8">0.18</span><span style="color:#cccccc">),</span>
<span style="color:#000">    </span><span style="color:#ce9178">inset</span><span style="color:#cccccc"> </span><span style="color:#b5cea8">0</span><span style="color:#cccccc"> </span><span style="color:#b5cea8">0</span><span style="color:#cccccc"> </span><span style="color:#b5cea8">0</span><span style="color:#cccccc"> </span><span style="color:#b5cea8">1px</span><span style="color:#cccccc"> </span><span style="color:#dcdcaa">rgba</span><span style="color:#cccccc">(</span><span style="color:#b5cea8">244</span><span style="color:#cccccc">, </span><span style="color:#b5cea8">182</span><span style="color:#cccccc">, </span><span style="color:#b5cea8">67</span><span style="color:#cccccc">, </span><span style="color:#b5cea8">0.03</span><span style="color:#cccccc">),</span>
<span style="color:#000">    </span><span style="color:#b5cea8">0</span><span style="color:#cccccc"> </span><span style="color:#b5cea8">2px</span><span style="color:#cccccc"> </span><span style="color:#b5cea8">10px</span><span style="color:#cccccc"> </span><span style="color:#dcdcaa">rgba</span><span style="color:#cccccc">(</span><span style="color:#b5cea8">0</span><span style="color:#cccccc">, </span><span style="color:#b5cea8">0</span><span style="color:#cccccc">, </span><span style="color:#b5cea8">0</span><span style="color:#cccccc">, </span><span style="color:#b5cea8">0.18</span><span style="color:#cccccc">);</span>
<span style="color:#000">  </span><span style="color:#9cdcfe">text-shadow</span><span style="color:#cccccc">:</span><span style="color:#cccccc"> </span><span style="color:#b5cea8">0</span><span style="color:#cccccc"> </span><span style="color:#b5cea8">1px</span><span style="color:#cccccc"> </span><span style="color:#b5cea8">0</span><span style="color:#cccccc"> </span><span style="color:#dcdcaa">rgba</span><span style="color:#cccccc">(</span><span style="color:#b5cea8">0</span><span style="color:#cccccc">, </span><span style="color:#b5cea8">0</span><span style="color:#cccccc">, </span><span style="color:#b5cea8">0</span><span style="color:#cccccc">, </span><span style="color:#b5cea8">0.22</span><span style="color:#cccccc">);</span>
<span style="color:#000">  </span><span style="color:#9cdcfe">backdrop-filter</span><span style="color:#cccccc">:</span><span style="color:#cccccc"> </span><span style="color:#dcdcaa">blur</span><span style="color:#cccccc">(</span><span style="color:#b5cea8">14px</span><span style="color:#cccccc">);</span>
<span style="color:#000">  </span><span style="color:#9cdcfe">-webkit-backdrop-filter</span><span style="color:#cccccc">:</span><span style="color:#cccccc"> </span><span style="color:#dcdcaa">blur</span><span style="color:#cccccc">(</span><span style="color:#b5cea8">14px</span><span style="color:#cccccc">);</span>
<span style="color:#000">  </span><span style="color:#9cdcfe">transition</span><span style="color:#cccccc">:</span>
<span style="color:#000">    </span><span style="color:#ce9178">transform</span><span style="color:#cccccc"> </span><span style="color:#b5cea8">900ms</span><span style="color:#cccccc"> </span><span style="color:#dcdcaa">var</span><span style="color:#cccccc">(--</span><span style="color:#ce9178">hero-cta-intro-ease</span><span style="color:#cccccc">),</span>
<span style="color:#000">    </span><span style="color:#ce9178">opacity</span><span style="color:#cccccc"> </span><span style="color:#b5cea8">1000ms</span><span style="color:#cccccc"> </span><span style="color:#dcdcaa">cubic-bezier</span><span style="color:#cccccc">(</span><span style="color:#b5cea8">0.20</span><span style="color:#cccccc">, </span><span style="color:#b5cea8">0.12</span><span style="color:#cccccc">, </span><span style="color:#b5cea8">0.2</span><span style="color:#cccccc">, </span><span style="color:#b5cea8">1</span><span style="color:#cccccc">),</span>
<span style="color:#000">    </span><span style="color:#ce9178">color</span><span style="color:#cccccc"> </span><span style="color:#b5cea8">220ms</span><span style="color:#cccccc"> </span><span style="color:#ce9178">ease</span><span style="color:#cccccc">,</span>
<span style="color:#000">    </span><span style="color:#ce9178">background</span><span style="color:#cccccc"> </span><span style="color:#b5cea8">220ms</span><span style="color:#cccccc"> </span><span style="color:#ce9178">ease</span><span style="color:#cccccc">,</span>
<span style="color:#000">    </span><span style="color:#ce9178">border-color</span><span style="color:#cccccc"> </span><span style="color:#b5cea8">220ms</span><span style="color:#cccccc"> </span><span style="color:#ce9178">ease</span><span style="color:#cccccc">,</span>
<span style="color:#000">    </span><span style="color:#ce9178">box-shadow</span><span style="color:#cccccc"> </span><span style="color:#b5cea8">220ms</span><span style="color:#cccccc"> </span><span style="color:#ce9178">ease</span><span style="color:#cccccc">;</span>
<span style="color:#000"></span><span style="color:#cccccc">}</span>

<span style="color:#000"></span><span style="color:#d7ba7d">.hero-cta span {</span>
<span style="color:#000">  </span><span style="color:#9cdcfe">display</span><span style="color:#cccccc">:</span><span style="color:#cccccc"> </span><span style="color:#ce9178">block</span><span style="color:#cccccc">;</span>
<span style="color:#000"></span><span style="color:#cccccc">}</span>

<span style="color:#000"></span><span style="color:#d7ba7d">.hero-cta svg {</span>
<span style="color:#000">  </span><span style="color:#9cdcfe">width</span><span style="color:#cccccc">:</span><span style="color:#cccccc"> </span><span style="color:#b5cea8">18px</span><span style="color:#cccccc">;</span>
<span style="color:#000">  </span><span style="color:#9cdcfe">height</span><span style="color:#cccccc">:</span><span style="color:#cccccc"> </span><span style="color:#b5cea8">18px</span><span style="color:#cccccc">;</span>
<span style="color:#000">  </span><span style="color:#9cdcfe">flex-shrink</span><span style="color:#cccccc">:</span><span style="color:#cccccc"> </span><span style="color:#b5cea8">0</span><span style="color:#cccccc">;</span>
<span style="color:#000">  </span><span style="color:#9cdcfe">stroke</span><span style="color:#cccccc">:</span><span style="color:#cccccc"> </span><span style="color:#ce9178">currentColor</span><span style="color:#cccccc">;</span>
<span style="color:#000">  </span><span style="color:#9cdcfe">stroke-width</span><span style="color:#cccccc">:</span><span style="color:#cccccc"> </span><span style="color:#b5cea8">2</span><span style="color:#cccccc">;</span>
<span style="color:#000">  </span><span style="color:#9cdcfe">stroke-linecap</span><span style="color:#cccccc">:</span><span style="color:#cccccc"> </span><span style="color:#ce9178">round</span><span style="color:#cccccc">;</span>
<span style="color:#000">  </span><span style="color:#9cdcfe">stroke-linejoin</span><span style="color:#cccccc">:</span><span style="color:#cccccc"> </span><span style="color:#ce9178">round</span><span style="color:#cccccc">;</span>
<span style="color:#000">  </span><span style="color:#9cdcfe">transition</span><span style="color:#cccccc">:</span><span style="color:#cccccc"> </span><span style="color:#ce9178">transform</span><span style="color:#cccccc"> </span><span style="color:#b5cea8">220ms</span><span style="color:#cccccc"> </span><span style="color:#ce9178">ease</span><span style="color:#cccccc">;</span>
<span style="color:#000"></span><span style="color:#cccccc">}</span>

<span style="color:#000"></span><span style="color:#d7ba7d">.hero-cta:hover,</span>
<span style="color:#000"></span><span style="color:#d7ba7d">.hero-cta:focus-visible {</span>
<span style="color:#000">  </span><span style="color:#9cdcfe">border-color</span><span style="color:#cccccc">:</span><span style="color:#cccccc"> </span><span style="color:#dcdcaa">rgba</span><span style="color:#cccccc">(</span><span style="color:#b5cea8">183</span><span style="color:#cccccc">, </span><span style="color:#b5cea8">149</span><span style="color:#cccccc">, </span><span style="color:#b5cea8">97</span><span style="color:#cccccc">, </span><span style="color:#b5cea8">0.32</span><span style="color:#cccccc">);</span>
<span style="color:#000">  </span><span style="color:#9cdcfe">color</span><span style="color:#cccccc">:</span><span style="color:#cccccc"> </span><span style="color:#dcdcaa">rgba</span><span style="color:#cccccc">(</span><span style="color:#b5cea8">250</span><span style="color:#cccccc">, </span><span style="color:#b5cea8">202</span><span style="color:#cccccc">, </span><span style="color:#b5cea8">106</span><span style="color:#cccccc">, </span><span style="color:#b5cea8">0.96</span><span style="color:#cccccc">);</span>
<span style="color:#000">  </span><span style="color:#9cdcfe">background</span><span style="color:#cccccc">:</span>
<span style="color:#000">    </span><span style="color:#dcdcaa">linear-gradient</span><span style="color:#cccccc">(</span>
<span style="color:#000">      </span><span style="color:#ce9178">to</span><span style="color:#cccccc"> </span><span style="color:#ce9178">bottom</span><span style="color:#cccccc">,</span>
<span style="color:#000">      </span><span style="color:#dcdcaa">rgba</span><span style="color:#cccccc">(</span><span style="color:#b5cea8">252</span><span style="color:#cccccc">, </span><span style="color:#b5cea8">239</span><span style="color:#cccccc">, </span><span style="color:#b5cea8">212</span><span style="color:#cccccc">, </span><span style="color:#b5cea8">0.13</span><span style="color:#cccccc">) </span><span style="color:#b5cea8">0%</span><span style="color:#cccccc">,</span>
<span style="color:#000">      </span><span style="color:#dcdcaa">rgba</span><span style="color:#cccccc">(</span><span style="color:#b5cea8">252</span><span style="color:#cccccc">, </span><span style="color:#b5cea8">239</span><span style="color:#cccccc">, </span><span style="color:#b5cea8">212</span><span style="color:#cccccc">, </span><span style="color:#b5cea8">0.045</span><span style="color:#cccccc">) </span><span style="color:#b5cea8">52%</span><span style="color:#cccccc">,</span>
<span style="color:#000">      </span><span style="color:#dcdcaa">rgba</span><span style="color:#cccccc">(</span><span style="color:#b5cea8">252</span><span style="color:#cccccc">, </span><span style="color:#b5cea8">239</span><span style="color:#cccccc">, </span><span style="color:#b5cea8">212</span><span style="color:#cccccc">, </span><span style="color:#b5cea8">0</span><span style="color:#cccccc">) </span><span style="color:#b5cea8">100%</span>
<span style="color:#000">    </span><span style="color:#cccccc">),</span>
<span style="color:#000">    </span><span style="color:#dcdcaa">radial-gradient</span><span style="color:#cccccc">(</span>
<span style="color:#000">      </span><span style="color:#b5cea8">115%</span><span style="color:#cccccc"> </span><span style="color:#b5cea8">100%</span><span style="color:#cccccc"> </span><span style="color:#ce9178">at</span><span style="color:#cccccc"> </span><span style="color:#b5cea8">0%</span><span style="color:#cccccc"> </span><span style="color:#b5cea8">0%</span><span style="color:#cccccc">,</span>
<span style="color:#000">      </span><span style="color:#dcdcaa">rgba</span><span style="color:#cccccc">(</span><span style="color:#b5cea8">244</span><span style="color:#cccccc">, </span><span style="color:#b5cea8">182</span><span style="color:#cccccc">, </span><span style="color:#b5cea8">67</span><span style="color:#cccccc">, </span><span style="color:#b5cea8">0.11</span><span style="color:#cccccc">) </span><span style="color:#b5cea8">0%</span><span style="color:#cccccc">,</span>
<span style="color:#000">      </span><span style="color:#dcdcaa">rgba</span><span style="color:#cccccc">(</span><span style="color:#b5cea8">244</span><span style="color:#cccccc">, </span><span style="color:#b5cea8">182</span><span style="color:#cccccc">, </span><span style="color:#b5cea8">67</span><span style="color:#cccccc">, </span><span style="color:#b5cea8">0.03</span><span style="color:#cccccc">) </span><span style="color:#b5cea8">34%</span><span style="color:#cccccc">,</span>
<span style="color:#000">      </span><span style="color:#dcdcaa">rgba</span><span style="color:#cccccc">(</span><span style="color:#b5cea8">244</span><span style="color:#cccccc">, </span><span style="color:#b5cea8">182</span><span style="color:#cccccc">, </span><span style="color:#b5cea8">67</span><span style="color:#cccccc">, </span><span style="color:#b5cea8">0</span><span style="color:#cccccc">) </span><span style="color:#b5cea8">67%</span>
<span style="color:#000">    </span><span style="color:#cccccc">),</span>
<span style="color:#000">    </span><span style="color:#dcdcaa">radial-gradient</span><span style="color:#cccccc">(</span>
<span style="color:#000">      </span><span style="color:#b5cea8">115%</span><span style="color:#cccccc"> </span><span style="color:#b5cea8">100%</span><span style="color:#cccccc"> </span><span style="color:#ce9178">at</span><span style="color:#cccccc"> </span><span style="color:#b5cea8">100%</span><span style="color:#cccccc"> </span><span style="color:#b5cea8">0%</span><span style="color:#cccccc">,</span>
<span style="color:#000">      </span><span style="color:#dcdcaa">rgba</span><span style="color:#cccccc">(</span><span style="color:#b5cea8">244</span><span style="color:#cccccc">, </span><span style="color:#b5cea8">182</span><span style="color:#cccccc">, </span><span style="color:#b5cea8">67</span><span style="color:#cccccc">, </span><span style="color:#b5cea8">0.104</span><span style="color:#cccccc">) </span><span style="color:#b5cea8">0%</span><span style="color:#cccccc">,</span>
<span style="color:#000">      </span><span style="color:#dcdcaa">rgba</span><span style="color:#cccccc">(</span><span style="color:#b5cea8">244</span><span style="color:#cccccc">, </span><span style="color:#b5cea8">182</span><span style="color:#cccccc">, </span><span style="color:#b5cea8">67</span><span style="color:#cccccc">, </span><span style="color:#b5cea8">0.028</span><span style="color:#cccccc">) </span><span style="color:#b5cea8">36%</span><span style="color:#cccccc">,</span>
<span style="color:#000">      </span><span style="color:#dcdcaa">rgba</span><span style="color:#cccccc">(</span><span style="color:#b5cea8">244</span><span style="color:#cccccc">, </span><span style="color:#b5cea8">182</span><span style="color:#cccccc">, </span><span style="color:#b5cea8">67</span><span style="color:#cccccc">, </span><span style="color:#b5cea8">0</span><span style="color:#cccccc">) </span><span style="color:#b5cea8">67%</span>
<span style="color:#000">    </span><span style="color:#cccccc">),</span>
<span style="color:#000">    </span><span style="color:#dcdcaa">radial-gradient</span><span style="color:#cccccc">(</span>
<span style="color:#000">      </span><span style="color:#b5cea8">125%</span><span style="color:#cccccc"> </span><span style="color:#b5cea8">130%</span><span style="color:#cccccc"> </span><span style="color:#ce9178">at</span><span style="color:#cccccc"> </span><span style="color:#b5cea8">50%</span><span style="color:#cccccc"> </span><span style="color:#b5cea8">100%</span><span style="color:#cccccc">,</span>
<span style="color:#000">      </span><span style="color:#dcdcaa">rgba</span><span style="color:#cccccc">(</span><span style="color:#b5cea8">188</span><span style="color:#cccccc">, </span><span style="color:#b5cea8">137</span><span style="color:#cccccc">, </span><span style="color:#b5cea8">59</span><span style="color:#cccccc">, </span><span style="color:#b5cea8">0.06</span><span style="color:#cccccc">) </span><span style="color:#b5cea8">0%</span><span style="color:#cccccc">,</span>
<span style="color:#000">      </span><span style="color:#dcdcaa">rgba</span><span style="color:#cccccc">(</span><span style="color:#b5cea8">188</span><span style="color:#cccccc">, </span><span style="color:#b5cea8">137</span><span style="color:#cccccc">, </span><span style="color:#b5cea8">59</span><span style="color:#cccccc">, </span><span style="color:#b5cea8">0.024</span><span style="color:#cccccc">) </span><span style="color:#b5cea8">34%</span><span style="color:#cccccc">,</span>
<span style="color:#000">      </span><span style="color:#dcdcaa">rgba</span><span style="color:#cccccc">(</span><span style="color:#b5cea8">188</span><span style="color:#cccccc">, </span><span style="color:#b5cea8">137</span><span style="color:#cccccc">, </span><span style="color:#b5cea8">59</span><span style="color:#cccccc">, </span><span style="color:#b5cea8">0</span><span style="color:#cccccc">) </span><span style="color:#b5cea8">66%</span>
<span style="color:#000">    </span><span style="color:#cccccc">),</span>
<span style="color:#000">    </span><span style="color:#dcdcaa">linear-gradient</span><span style="color:#cccccc">(</span>
<span style="color:#000">      </span><span style="color:#b5cea8">180deg</span><span style="color:#cccccc">,</span>
<span style="color:#000">      </span><span style="color:#dcdcaa">rgba</span><span style="color:#cccccc">(</span><span style="color:#b5cea8">31</span><span style="color:#cccccc">, </span><span style="color:#b5cea8">27</span><span style="color:#cccccc">, </span><span style="color:#b5cea8">20</span><span style="color:#cccccc">, </span><span style="color:#b5cea8">0.24</span><span style="color:#cccccc">) </span><span style="color:#b5cea8">0%</span><span style="color:#cccccc">,</span>
<span style="color:#000">      </span><span style="color:#dcdcaa">rgba</span><span style="color:#cccccc">(</span><span style="color:#b5cea8">16</span><span style="color:#cccccc">, </span><span style="color:#b5cea8">19</span><span style="color:#cccccc">, </span><span style="color:#b5cea8">26</span><span style="color:#cccccc">, </span><span style="color:#b5cea8">0.42</span><span style="color:#cccccc">) </span><span style="color:#b5cea8">100%</span>
<span style="color:#000">    </span><span style="color:#cccccc">);</span>
<span style="color:#000">  </span><span style="color:#9cdcfe">box-shadow</span><span style="color:#cccccc">:</span>
<span style="color:#000">    </span><span style="color:#ce9178">inset</span><span style="color:#cccccc"> </span><span style="color:#b5cea8">0</span><span style="color:#cccccc"> </span><span style="color:#b5cea8">1px</span><span style="color:#cccccc"> </span><span style="color:#b5cea8">0</span><span style="color:#cccccc"> </span><span style="color:#dcdcaa">rgba</span><span style="color:#cccccc">(</span><span style="color:#b5cea8">255</span><span style="color:#cccccc">, </span><span style="color:#b5cea8">247</span><span style="color:#cccccc">, </span><span style="color:#b5cea8">228</span><span style="color:#cccccc">, </span><span style="color:#b5cea8">0.15</span><span style="color:#cccccc">),</span>
<span style="color:#000">    </span><span style="color:#ce9178">inset</span><span style="color:#cccccc"> </span><span style="color:#b5cea8">0</span><span style="color:#cccccc"> -</span><span style="color:#b5cea8">1px</span><span style="color:#cccccc"> </span><span style="color:#b5cea8">0</span><span style="color:#cccccc"> </span><span style="color:#dcdcaa">rgba</span><span style="color:#cccccc">(</span><span style="color:#b5cea8">132</span><span style="color:#cccccc">, </span><span style="color:#b5cea8">97</span><span style="color:#cccccc">, </span><span style="color:#b5cea8">55</span><span style="color:#cccccc">, </span><span style="color:#b5cea8">0.18</span><span style="color:#cccccc">),</span>
<span style="color:#000">    </span><span style="color:#ce9178">inset</span><span style="color:#cccccc"> </span><span style="color:#b5cea8">0</span><span style="color:#cccccc"> </span><span style="color:#b5cea8">0</span><span style="color:#cccccc"> </span><span style="color:#b5cea8">0</span><span style="color:#cccccc"> </span><span style="color:#b5cea8">1px</span><span style="color:#cccccc"> </span><span style="color:#dcdcaa">rgba</span><span style="color:#cccccc">(</span><span style="color:#b5cea8">244</span><span style="color:#cccccc">, </span><span style="color:#b5cea8">182</span><span style="color:#cccccc">, </span><span style="color:#b5cea8">67</span><span style="color:#cccccc">, </span><span style="color:#b5cea8">0.04</span><span style="color:#cccccc">),</span>
<span style="color:#000">    </span><span style="color:#b5cea8">0</span><span style="color:#cccccc"> </span><span style="color:#b5cea8">3px</span><span style="color:#cccccc"> </span><span style="color:#b5cea8">12px</span><span style="color:#cccccc"> </span><span style="color:#dcdcaa">rgba</span><span style="color:#cccccc">(</span><span style="color:#b5cea8">0</span><span style="color:#cccccc">, </span><span style="color:#b5cea8">0</span><span style="color:#cccccc">, </span><span style="color:#b5cea8">0</span><span style="color:#cccccc">, </span><span style="color:#b5cea8">0.2</span><span style="color:#cccccc">);</span>
<span style="color:#000"></span><span style="color:#cccccc">}</span>

<span style="color:#000"></span><span style="color:#d7ba7d">.hero-cta:hover svg,</span>
<span style="color:#000"></span><span style="color:#d7ba7d">.hero-cta:focus-visible svg {</span>
<span style="color:#000">  </span><span style="color:#9cdcfe">transform</span><span style="color:#cccccc">:</span><span style="color:#cccccc"> </span><span style="color:#dcdcaa">translate3d</span><span style="color:#cccccc">(</span><span style="color:#b5cea8">2px</span><span style="color:#cccccc">, </span><span style="color:#b5cea8">0</span><span style="color:#cccccc">, </span><span style="color:#b5cea8">0</span><span style="color:#cccccc">);</span>
<span style="color:#000"></span><span style="color:#cccccc">}</span>
</div></div>
<div style="position:absolute;left:1869px;top:196px;width:31px;height:597px;background:#1f1f1f;"></div>
<div style="position:absolute;left:1869px;top:196px;width:1.5px;height:597px;background:#0e0e12;"></div>
<div style="position:absolute;left:1871px;top:196px;width:29px;height:4px;background:#5a5a5a;"></div>
<div style="position:absolute;left:1870px;top:684px;width:9px;height:11px;background:#2ea043;"></div>
<div style="position:absolute;left:1900px;top:73px;width:2px;height:722px;background:#2b2b2b;"></div>
<div style="position:absolute;left:1902px;top:73px;width:959px;height:74px;background:#181818;"></div>
<div style="position:absolute;left:1902px;top:145px;width:959px;height:2px;background:#2b2b2b;"></div>
<div style="position:absolute;left:1902px;top:73px;width:282px;height:74px;background:#1f1f1f;"></div>
<div style="position:absolute;left:2184px;top:73px;width:2px;height:74px;background:#2b2b2b;"></div>
<svg style="position:absolute;left:1929px;top:101px;" width="26" height="20" viewBox="0 0 26 20" fill="none"><path d="M8.6 2 2 10.0 8.6 18M17.4 2 24 10.0 17.4 18" stroke="#e37933" stroke-width="3" stroke-linecap="round" stroke-linejoin="round"/></svg>
<div style="position:absolute;left:1968px;top:93.90px;font-family:'Liberation Sans', sans-serif;font-size:28.2px;line-height:36.66px;color:#9d9d9d;white-space:pre;transform:scaleX(0.9930);transform-origin:0 0;">resume.html</div>
<svg style="position:absolute;left:2143px;top:99px;" width="22" height="22" viewBox="0 0 22 22" fill="none"><path d="M1.5 1.5 20.5 20.5M20.5 1.5 1.5 20.5" stroke="#9d9d9d" stroke-width="2.4"/></svg>
<svg style="position:absolute;left:2805px;top:106.6px;" width="23" height="5" viewBox="0 0 23 5" fill="none"><circle cx="2.4" cy="2.4" r="2.4" fill="#cccccc"/><circle cx="11.4" cy="2.4" r="2.4" fill="#cccccc"/><circle cx="20.4" cy="2.4" r="2.4" fill="#cccccc"/></svg>
<svg style="position:absolute;left:1943px;top:163px;" width="26" height="19" viewBox="0 0 26 19" fill="none"><path d="M8.6 2 2 9.5 8.6 17M17.4 2 24 9.5 17.4 17" stroke="#e37933" stroke-width="3" stroke-linecap="round" stroke-linejoin="round"/></svg>
<div style="position:absolute;left:1981px;top:154.90px;font-family:'Liberation Sans', sans-serif;font-size:28.2px;line-height:36.66px;color:#a9a9a9;white-space:pre;transform:scaleX(0.9930);transform-origin:0 0;">resume.html</div>
<svg style="position:absolute;left:2144px;top:162px;" width="16" height="26" viewBox="0 0 16 26" fill="none"><path d="M3 2l10 11L3 24" stroke="#a9a9a9" stroke-width="2.4" stroke-linecap="round" stroke-linejoin="round"/></svg>
<svg style="position:absolute;left:2171px;top:179.2px;" width="19" height="4" viewBox="0 0 19 4" fill="none"><circle cx="1.8" cy="1.8" r="1.8" fill="#a9a9a9"/><circle cx="9.3" cy="1.8" r="1.8" fill="#a9a9a9"/><circle cx="16.8" cy="1.8" r="1.8" fill="#a9a9a9"/></svg>
<div style="position:absolute;left:1902px;top:196px;width:933px;height:597px;overflow:hidden;">
<div style="position:absolute;left:-1902px;top:-196px;width:2861px;height:1837px;">
<div style="position:absolute;left:1941.14px;top:344.61px;font-family:'Liberation Mono', monospace;font-size:27.7px;line-height:36.01px;color:#6e7681;white-space:pre;">237</div>
<div style="position:absolute;left:2047px;top:344.61px;font-family:'Liberation Mono', monospace;font-size:27.7px;line-height:36.01px;color:#cccccc;white-space:pre;"><span style="color:#cccccc">                      </span><span style="color:#808080">&lt;/</span><span style="color:#569cd6">ul</span><span style="color:#808080">&gt;</span></div>
<div style="position:absolute;left:1941.14px;top:385.61px;font-family:'Liberation Mono', monospace;font-size:27.7px;line-height:36.01px;color:#6e7681;white-space:pre;">238</div>
<div style="position:absolute;left:2047px;top:385.61px;font-family:'Liberation Mono', monospace;font-size:27.7px;line-height:36.01px;color:#cccccc;white-space:pre;"><span style="color:#cccccc">                    </span><span style="color:#808080">&lt;/</span><span style="color:#569cd6">div</span><span style="color:#808080">&gt;</span></div>
<div style="position:absolute;left:1941.14px;top:426.61px;font-family:'Liberation Mono', monospace;font-size:27.7px;line-height:36.01px;color:#6e7681;white-space:pre;">239</div>
<div style="position:absolute;left:1941.14px;top:467.61px;font-family:'Liberation Mono', monospace;font-size:27.7px;line-height:36.01px;color:#6e7681;white-space:pre;">240</div>
<div style="position:absolute;left:2047px;top:467.61px;font-family:'Liberation Mono', monospace;font-size:27.7px;line-height:36.01px;color:#cccccc;white-space:pre;"><span style="color:#cccccc">                    </span><span style="color:#808080">&lt;</span><span style="color:#569cd6">div</span><span style="color:#cccccc"> </span><span style="color:#9cdcfe">class</span><span style="color:#cccccc">=</span><span style="color:#ce9178">"resume-entry"</span><span style="color:#808080">&gt;</span></div>
<div style="position:absolute;left:1941.14px;top:508.61px;font-family:'Liberation Mono', monospace;font-size:27.7px;line-height:36.01px;color:#6e7681;white-space:pre;">241</div>
<div style="position:absolute;left:2047px;top:508.61px;font-family:'Liberation Mono', monospace;font-size:27.7px;line-height:36.01px;color:#cccccc;white-space:pre;"><span style="color:#cccccc">                      </span><span style="color:#808080">&lt;</span><span style="color:#569cd6">div</span><span style="color:#cccccc"> </span><span style="color:#9cdcfe">class</span><span style="color:#cccccc">=</span><span style="color:#ce9178">"resume-entry-header"</span><span style="color:#808080">&gt;</span></div>
<div style="position:absolute;left:1941.14px;top:549.61px;font-family:'Liberation Mono', monospace;font-size:27.7px;line-height:36.01px;color:#6e7681;white-space:pre;">242</div>
<div style="position:absolute;left:2047px;top:549.61px;font-family:'Liberation Mono', monospace;font-size:27.7px;line-height:36.01px;color:#cccccc;white-space:pre;"><span style="color:#cccccc">                        </span><span style="color:#808080">&lt;</span><span style="color:#569cd6">div</span><span style="color:#cccccc"> </span><span style="color:#9cdcfe">class</span><span style="color:#cccccc">=</span><span style="color:#ce9178">"resume-entry-heading"</span><span style="color:#808080">&gt;</span></div>
<div style="position:absolute;left:1941.14px;top:590.61px;font-family:'Liberation Mono', monospace;font-size:27.7px;line-height:36.01px;color:#6e7681;white-space:pre;">243</div>
<div style="position:absolute;left:2047px;top:590.61px;font-family:'Liberation Mono', monospace;font-size:27.7px;line-height:36.01px;color:#cccccc;white-space:pre;"><span style="color:#cccccc">                          </span><span style="color:#808080">&lt;</span><span style="color:#569cd6">h3</span><span style="color:#cccccc"> </span><span style="color:#9cdcfe">class</span><span style="color:#cccccc">=</span><span style="color:#ce9178">"resume-entry-title"</span><span style="color:#808080">&gt;</span></div>
<div style="position:absolute;left:1941.14px;top:631.61px;font-family:'Liberation Mono', monospace;font-size:27.7px;line-height:36.01px;color:#6e7681;white-space:pre;">244</div>
<div style="position:absolute;left:2047px;top:631.61px;font-family:'Liberation Mono', monospace;font-size:27.7px;line-height:36.01px;color:#cccccc;white-space:pre;"><span style="color:#cccccc">                          </span><span style="color:#808080">&lt;</span><span style="color:#569cd6">p</span><span style="color:#cccccc"> </span><span style="color:#9cdcfe">class</span><span style="color:#cccccc">=</span><span style="color:#ce9178">"resume-entry-company"</span><span style="color:#808080">&gt;</span></div>
<div style="position:absolute;left:1941.14px;top:672.61px;font-family:'Liberation Mono', monospace;font-size:27.7px;line-height:36.01px;color:#6e7681;white-space:pre;">245</div>
<div style="position:absolute;left:2047px;top:672.61px;font-family:'Liberation Mono', monospace;font-size:27.7px;line-height:36.01px;color:#cccccc;white-space:pre;"><span style="color:#cccccc">                          </span><span style="color:#808080">&lt;</span><span style="color:#569cd6">p</span><span style="color:#cccccc"> </span><span style="color:#9cdcfe">class</span><span style="color:#cccccc">=</span><span style="color:#ce9178">"resume-entry-dates"</span><span style="color:#808080">&gt;</span></div>
<div style="position:absolute;left:1941.14px;top:713.61px;font-family:'Liberation Mono', monospace;font-size:27.7px;line-height:36.01px;color:#6e7681;white-space:pre;">246</div>
<div style="position:absolute;left:2047px;top:713.61px;font-family:'Liberation Mono', monospace;font-size:27.7px;line-height:36.01px;color:#cccccc;white-space:pre;"><span style="color:#cccccc">                        </span><span style="color:#808080">&lt;/</span><span style="color:#569cd6">div</span><span style="color:#808080">&gt;</span></div>
<div style="position:absolute;left:1941.14px;top:754.61px;font-family:'Liberation Mono', monospace;font-size:27.7px;line-height:36.01px;color:#6e7681;white-space:pre;">247</div>
<div style="position:absolute;left:2047px;top:754.61px;font-family:'Liberation Mono', monospace;font-size:27.7px;line-height:36.01px;color:#cccccc;white-space:pre;"><span style="color:#cccccc">                        </span><span style="color:#808080">&lt;</span><span style="color:#569cd6">div</span><span style="color:#cccccc"> </span><span style="color:#9cdcfe">class</span><span style="color:#cccccc">=</span><span style="color:#ce9178">"resume-chips"</span><span style="color:#808080">&gt;</span></div>
<div style="position:absolute;left:2047.8px;top:340px;width:1.6px;height:453px;background:#404040;"></div>
<div style="position:absolute;left:2081.0px;top:340px;width:1.6px;height:453px;background:#404040;"></div>
<div style="position:absolute;left:2114.3px;top:340px;width:1.6px;height:453px;background:#404040;"></div>
<div style="position:absolute;left:2147.5px;top:340px;width:1.6px;height:453px;background:#404040;"></div>
<div style="position:absolute;left:2180.8px;top:340px;width:1.6px;height:453px;background:#404040;"></div>
<div style="position:absolute;left:2214.0px;top:340px;width:1.6px;height:453px;background:#404040;"></div>
<div style="position:absolute;left:2247.2px;top:340px;width:1.6px;height:453px;background:#404040;"></div>
<div style="position:absolute;left:2280.5px;top:340px;width:1.6px;height:453px;background:#404040;"></div>
<div style="position:absolute;left:2313.7px;top:340px;width:1.6px;height:453px;background:#404040;"></div>
<div style="position:absolute;left:2347.0px;top:340px;width:1.6px;height:453px;background:#404040;"></div>
<div style="position:absolute;left:2380.2px;top:340px;width:1.6px;height:41px;background:#404040;"></div>
<div style="position:absolute;left:2380.2px;top:504px;width:1.6px;height:289px;background:#404040;"></div>
<div style="position:absolute;left:2413.4px;top:545px;width:1.6px;height:248px;background:#404040;"></div>
<div style="position:absolute;left:2446.7px;top:586px;width:1.6px;height:123px;background:#404040;"></div>
</div></div>
<div style="position:absolute;left:1902px;top:196px;width:933px;height:164px;background:#1f1f1f;"></div>
<div style="position:absolute;left:1974.38px;top:200.61px;font-family:'Liberation Mono', monospace;font-size:27.7px;line-height:36.01px;color:#6e7681;white-space:pre;">2</div>
<div style="position:absolute;left:2047px;top:200.61px;font-family:'Liberation Mono', monospace;font-size:27.7px;line-height:36.01px;color:#cccccc;white-space:pre;"><span style="color:#cccccc"></span><span style="color:#808080">&lt;</span><span style="color:#569cd6">html</span><span style="color:#cccccc"> </span><span style="color:#9cdcfe">lang</span><span style="color:#cccccc">=</span><span style="color:#ce9178">"en"</span><span style="color:#808080">&gt;</span></div>
<div style="position:absolute;left:1957.76px;top:241.61px;font-family:'Liberation Mono', monospace;font-size:27.7px;line-height:36.01px;color:#6e7681;white-space:pre;">10</div>
<div style="position:absolute;left:2047px;top:241.61px;font-family:'Liberation Mono', monospace;font-size:27.7px;line-height:36.01px;color:#cccccc;white-space:pre;"><span style="color:#cccccc">  </span><span style="color:#808080">&lt;</span><span style="color:#569cd6">body</span><span style="color:#808080">&gt;</span></div>
<div style="position:absolute;left:1957.76px;top:282.61px;font-family:'Liberation Mono', monospace;font-size:27.7px;line-height:36.01px;color:#6e7681;white-space:pre;">51</div>
<div style="position:absolute;left:2047px;top:282.61px;font-family:'Liberation Mono', monospace;font-size:27.7px;line-height:36.01px;color:#cccccc;white-space:pre;"><span style="color:#cccccc">    </span><span style="color:#808080">&lt;</span><span style="color:#569cd6">main</span><span style="color:#cccccc"> </span><span style="color:#9cdcfe">class</span><span style="color:#cccccc">=</span><span style="color:#ce9178">"resume-page-main"</span><span style="color:#808080">&gt;</span></div>
<div style="position:absolute;left:1957.76px;top:323.61px;font-family:'Liberation Mono', monospace;font-size:27.7px;line-height:36.01px;color:#6e7681;white-space:pre;">58</div>
<div style="position:absolute;left:2047px;top:323.61px;font-family:'Liberation Mono', monospace;font-size:27.7px;line-height:36.01px;color:#cccccc;white-space:pre;"><span style="color:#cccccc">      </span><span style="color:#808080">&lt;</span><span style="color:#569cd6">section</span><span style="color:#cccccc"> </span><span style="color:#9cdcfe">class</span><span style="color:#cccccc">=</span><span style="color:#ce9178">"section resume-page-shell"</span><span style="color:#808080">&gt;</span></div>
<div style="position:absolute;left:2736px;top:196px;width:99px;height:597px;background:rgba(31,31,31,0.82);"></div>
<div style="position:absolute;left:2744px;top:199px;width:91px;height:594px;overflow:hidden;"><div style="position:absolute;left:0;top:0;font-family:'Liberation Mono',monospace;font-size:13px;line-height:15.600px;white-space:pre;transform:scale(0.2538);transform-origin:0 0;font-weight:700;"><span style="color:#cccccc">                    </span><span style="color:#808080">&lt;</span><span style="color:#569cd6">div</span><span style="color:#9cdcfe"> class</span><span style="color:#cccccc">=</span><span style="color:#ce9178">"resume-entry"</span><span style="color:#808080">&gt;</span>
<span style="color:#cccccc">                      </span><span style="color:#808080">&lt;</span><span style="color:#569cd6">div</span><span style="color:#9cdcfe"> class</span><span style="color:#cccccc">=</span><span style="color:#ce9178">"resume-entry-header"</span><span style="color:#808080">&gt;</span>
<span style="color:#cccccc">                        </span><span style="color:#808080">&lt;</span><span style="color:#569cd6">div</span><span style="color:#9cdcfe"> class</span><span style="color:#cccccc">=</span><span style="color:#ce9178">"resume-entry-heading"</span><span style="color:#808080">&gt;</span>
<span style="color:#cccccc">                          </span><span style="color:#808080">&lt;</span><span style="color:#569cd6">h3</span><span style="color:#9cdcfe"> class</span><span style="color:#cccccc">=</span><span style="color:#ce9178">"resume-entry-title"</span><span style="color:#808080">&gt;</span><span style="color:#cccccc">Lead Designer</span><span style="color:#808080">&lt;/</span><span style="color:#569cd6">h3</span><span style="color:#808080">&gt;</span>
<span style="color:#cccccc">                          </span><span style="color:#808080">&lt;</span><span style="color:#569cd6">p</span><span style="color:#9cdcfe"> class</span><span style="color:#cccccc">=</span><span style="color:#ce9178">"resume-entry-company"</span><span style="color:#808080">&gt;</span><span style="color:#cccccc">Company</span><span style="color:#808080">&lt;/</span><span style="color:#569cd6">p</span><span style="color:#808080">&gt;</span>
<span style="color:#cccccc">                          </span><span style="color:#808080">&lt;</span><span style="color:#569cd6">p</span><span style="color:#9cdcfe"> class</span><span style="color:#cccccc">=</span><span style="color:#ce9178">"resume-entry-dates"</span><span style="color:#808080">&gt;</span><span style="color:#cccccc">2019 - 2021</span><span style="color:#808080">&lt;/</span><span style="color:#569cd6">p</span><span style="color:#808080">&gt;</span>
<span style="color:#cccccc">                        </span><span style="color:#808080">&lt;/</span><span style="color:#569cd6">div</span><span style="color:#808080">&gt;</span>
<span style="color:#cccccc">                        </span><span style="color:#808080">&lt;</span><span style="color:#569cd6">div</span><span style="color:#9cdcfe"> class</span><span style="color:#cccccc">=</span><span style="color:#ce9178">"resume-chips"</span><span style="color:#808080">&gt;</span>
<span style="color:#cccccc">                      </span><span style="color:#808080">&lt;/</span><span style="color:#569cd6">div</span><span style="color:#808080">&gt;</span>
<span style="color:#cccccc">                      </span><span style="color:#808080">&lt;</span><span style="color:#569cd6">p</span><span style="color:#9cdcfe"> class</span><span style="color:#cccccc">=</span><span style="color:#ce9178">"resume-entry-summary"</span><span style="color:#808080">&gt;</span>
<span style="color:#cccccc">                      </span><span style="color:#808080">&lt;</span><span style="color:#569cd6">ul</span><span style="color:#9cdcfe"> class</span><span style="color:#cccccc">=</span><span style="color:#ce9178">"resume-entry-list"</span><span style="color:#808080">&gt;</span>
<span style="color:#cccccc">                        </span><span style="color:#808080">&lt;</span><span style="color:#569cd6">li</span><span style="color:#808080">&gt;</span><span style="color:#cccccc">Built the system</span>
<span style="color:#cccccc">                        </span><span style="color:#808080">&lt;</span><span style="color:#569cd6">li</span><span style="color:#808080">&gt;</span><span style="color:#cccccc">Designed a domain</span>
<span style="color:#cccccc">                        </span><span style="color:#808080">&lt;</span><span style="color:#569cd6">li</span><span style="color:#808080">&gt;</span><span style="color:#cccccc">Created a custom</span>
<span style="color:#cccccc">                        </span><span style="color:#808080">&lt;</span><span style="color:#569cd6">li</span><span style="color:#808080">&gt;</span><span style="color:#cccccc">Added practical t</span>
<span style="color:#cccccc">                      </span><span style="color:#808080">&lt;/</span><span style="color:#569cd6">ul</span><span style="color:#808080">&gt;</span>
<span style="color:#cccccc">                    </span><span style="color:#808080">&lt;/</span><span style="color:#569cd6">div</span><span style="color:#808080">&gt;</span>

<span style="color:#cccccc">                    </span><span style="color:#808080">&lt;</span><span style="color:#569cd6">div</span><span style="color:#9cdcfe"> class</span><span style="color:#cccccc">=</span><span style="color:#ce9178">"resume-entry"</span><span style="color:#808080">&gt;</span>
<span style="color:#cccccc">                      </span><span style="color:#808080">&lt;</span><span style="color:#569cd6">div</span><span style="color:#9cdcfe"> class</span><span style="color:#cccccc">=</span><span style="color:#ce9178">"resume-entry-header"</span><span style="color:#808080">&gt;</span>
<span style="color:#cccccc">                        </span><span style="color:#808080">&lt;</span><span style="color:#569cd6">div</span><span style="color:#9cdcfe"> class</span><span style="color:#cccccc">=</span><span style="color:#ce9178">"resume-entry-heading"</span><span style="color:#808080">&gt;</span>
<span style="color:#cccccc">                          </span><span style="color:#808080">&lt;</span><span style="color:#569cd6">h3</span><span style="color:#9cdcfe"> class</span><span style="color:#cccccc">=</span><span style="color:#ce9178">"resume-entry-title"</span><span style="color:#808080">&gt;</span><span style="color:#cccccc">Lead Designer</span><span style="color:#808080">&lt;/</span><span style="color:#569cd6">h3</span><span style="color:#808080">&gt;</span>
<span style="color:#cccccc">                          </span><span style="color:#808080">&lt;</span><span style="color:#569cd6">p</span><span style="color:#9cdcfe"> class</span><span style="color:#cccccc">=</span><span style="color:#ce9178">"resume-entry-company"</span><span style="color:#808080">&gt;</span><span style="color:#cccccc">Company</span><span style="color:#808080">&lt;/</span><span style="color:#569cd6">p</span><span style="color:#808080">&gt;</span>
<span style="color:#cccccc">                          </span><span style="color:#808080">&lt;</span><span style="color:#569cd6">p</span><span style="color:#9cdcfe"> class</span><span style="color:#cccccc">=</span><span style="color:#ce9178">"resume-entry-dates"</span><span style="color:#808080">&gt;</span><span style="color:#cccccc">2019 - 2021</span><span style="color:#808080">&lt;/</span><span style="color:#569cd6">p</span><span style="color:#808080">&gt;</span>
<span style="color:#cccccc">                        </span><span style="color:#808080">&lt;/</span><span style="color:#569cd6">div</span><span style="color:#808080">&gt;</span>
<span style="color:#cccccc">                        </span><span style="color:#808080">&lt;</span><span style="color:#569cd6">div</span><span style="color:#9cdcfe"> class</span><span style="color:#cccccc">=</span><span style="color:#ce9178">"resume-chips"</span><span style="color:#808080">&gt;</span>
<span style="color:#cccccc">                      </span><span style="color:#808080">&lt;/</span><span style="color:#569cd6">div</span><span style="color:#808080">&gt;</span>
<span style="color:#cccccc">                      </span><span style="color:#808080">&lt;</span><span style="color:#569cd6">p</span><span style="color:#9cdcfe"> class</span><span style="color:#cccccc">=</span><span style="color:#ce9178">"resume-entry-summary"</span><span style="color:#808080">&gt;</span>
<span style="color:#cccccc">                      </span><span style="color:#808080">&lt;</span><span style="color:#569cd6">ul</span><span style="color:#9cdcfe"> class</span><span style="color:#cccccc">=</span><span style="color:#ce9178">"resume-entry-list"</span><span style="color:#808080">&gt;</span>
<span style="color:#cccccc">                        </span><span style="color:#808080">&lt;</span><span style="color:#569cd6">li</span><span style="color:#808080">&gt;</span><span style="color:#cccccc">Worked with machi</span>
<span style="color:#cccccc">                        </span><span style="color:#808080">&lt;</span><span style="color:#569cd6">li</span><span style="color:#808080">&gt;</span><span style="color:#cccccc">Designed the core</span>
<span style="color:#cccccc">                        </span><span style="color:#808080">&lt;</span><span style="color:#569cd6">li</span><span style="color:#808080">&gt;</span><span style="color:#cccccc">Studied how peopl</span>
<span style="color:#cccccc">                        </span><span style="color:#808080">&lt;</span><span style="color:#569cd6">li</span><span style="color:#808080">&gt;</span><span style="color:#cccccc">Mapped user exper</span>
<span style="color:#cccccc">                      </span><span style="color:#808080">&lt;/</span><span style="color:#569cd6">ul</span><span style="color:#808080">&gt;</span>
<span style="color:#cccccc">                    </span><span style="color:#808080">&lt;/</span><span style="color:#569cd6">div</span><span style="color:#808080">&gt;</span>

<span style="color:#cccccc">                    </span><span style="color:#808080">&lt;</span><span style="color:#569cd6">div</span><span style="color:#9cdcfe"> class</span><span style="color:#cccccc">=</span><span style="color:#ce9178">"resume-entry"</span><span style="color:#808080">&gt;</span>
<span style="color:#cccccc">                      </span><span style="color:#808080">&lt;</span><span style="color:#569cd6">div</span><span style="color:#9cdcfe"> class</span><span style="color:#cccccc">=</span><span style="color:#ce9178">"resume-entry-header"</span><span style="color:#808080">&gt;</span>
<span style="color:#cccccc">                        </span><span style="color:#808080">&lt;</span><span style="color:#569cd6">div</span><span style="color:#9cdcfe"> class</span><span style="color:#cccccc">=</span><span style="color:#ce9178">"resume-entry-heading"</span><span style="color:#808080">&gt;</span>
<span style="color:#cccccc">                          </span><span style="color:#808080">&lt;</span><span style="color:#569cd6">h3</span><span style="color:#9cdcfe"> class</span><span style="color:#cccccc">=</span><span style="color:#ce9178">"resume-entry-title"</span><span style="color:#808080">&gt;</span><span style="color:#cccccc">Lead Designer</span><span style="color:#808080">&lt;/</span><span style="color:#569cd6">h3</span><span style="color:#808080">&gt;</span>
<span style="color:#cccccc">                          </span><span style="color:#808080">&lt;</span><span style="color:#569cd6">p</span><span style="color:#9cdcfe"> class</span><span style="color:#cccccc">=</span><span style="color:#ce9178">"resume-entry-company"</span><span style="color:#808080">&gt;</span><span style="color:#cccccc">Company</span><span style="color:#808080">&lt;/</span><span style="color:#569cd6">p</span><span style="color:#808080">&gt;</span>
<span style="color:#cccccc">                          </span><span style="color:#808080">&lt;</span><span style="color:#569cd6">p</span><span style="color:#9cdcfe"> class</span><span style="color:#cccccc">=</span><span style="color:#ce9178">"resume-entry-dates"</span><span style="color:#808080">&gt;</span><span style="color:#cccccc">2019 - 2021</span><span style="color:#808080">&lt;/</span><span style="color:#569cd6">p</span><span style="color:#808080">&gt;</span>
<span style="color:#cccccc">                        </span><span style="color:#808080">&lt;/</span><span style="color:#569cd6">div</span><span style="color:#808080">&gt;</span>
<span style="color:#cccccc">                        </span><span style="color:#808080">&lt;</span><span style="color:#569cd6">div</span><span style="color:#9cdcfe"> class</span><span style="color:#cccccc">=</span><span style="color:#ce9178">"resume-chips"</span><span style="color:#808080">&gt;</span>
<span style="color:#cccccc">                      </span><span style="color:#808080">&lt;/</span><span style="color:#569cd6">div</span><span style="color:#808080">&gt;</span>
<span style="color:#cccccc">                      </span><span style="color:#808080">&lt;</span><span style="color:#569cd6">p</span><span style="color:#9cdcfe"> class</span><span style="color:#cccccc">=</span><span style="color:#ce9178">"resume-entry-summary"</span><span style="color:#808080">&gt;</span>
<span style="color:#cccccc">                      </span><span style="color:#808080">&lt;</span><span style="color:#569cd6">ul</span><span style="color:#9cdcfe"> class</span><span style="color:#cccccc">=</span><span style="color:#ce9178">"resume-entry-list"</span><span style="color:#808080">&gt;</span>
<span style="color:#cccccc">                        </span><span style="color:#808080">&lt;</span><span style="color:#569cd6">li</span><span style="color:#808080">&gt;</span><span style="color:#cccccc">Designed a multi</span>
<span style="color:#cccccc">                        </span><span style="color:#808080">&lt;</span><span style="color:#569cd6">li</span><span style="color:#808080">&gt;</span><span style="color:#cccccc">Conducted extensi</span>
<span style="color:#cccccc">                        </span><span style="color:#808080">&lt;</span><span style="color:#569cd6">li</span><span style="color:#808080">&gt;</span><span style="color:#cccccc">Designed time-box</span>
<span style="color:#cccccc">                      </span><span style="color:#808080">&lt;/</span><span style="color:#569cd6">ul</span><span style="color:#808080">&gt;</span>
<span style="color:#cccccc">                    </span><span style="color:#808080">&lt;/</span><span style="color:#569cd6">div</span><span style="color:#808080">&gt;</span>

<span style="color:#cccccc">                    </span><span style="color:#808080">&lt;</span><span style="color:#569cd6">div</span><span style="color:#9cdcfe"> class</span><span style="color:#cccccc">=</span><span style="color:#ce9178">"resume-entry"</span><span style="color:#808080">&gt;</span>
<span style="color:#cccccc">                      </span><span style="color:#808080">&lt;</span><span style="color:#569cd6">div</span><span style="color:#9cdcfe"> class</span><span style="color:#cccccc">=</span><span style="color:#ce9178">"resume-entry-header"</span><span style="color:#808080">&gt;</span>
<span style="color:#cccccc">                        </span><span style="color:#808080">&lt;</span><span style="color:#569cd6">div</span><span style="color:#9cdcfe"> class</span><span style="color:#cccccc">=</span><span style="color:#ce9178">"resume-entry-heading"</span><span style="color:#808080">&gt;</span>
<span style="color:#cccccc">                          </span><span style="color:#808080">&lt;</span><span style="color:#569cd6">h3</span><span style="color:#9cdcfe"> class</span><span style="color:#cccccc">=</span><span style="color:#ce9178">"resume-entry-title"</span><span style="color:#808080">&gt;</span><span style="color:#cccccc">Lead Designer</span><span style="color:#808080">&lt;/</span><span style="color:#569cd6">h3</span><span style="color:#808080">&gt;</span>
<span style="color:#cccccc">                          </span><span style="color:#808080">&lt;</span><span style="color:#569cd6">p</span><span style="color:#9cdcfe"> class</span><span style="color:#cccccc">=</span><span style="color:#ce9178">"resume-entry-company"</span><span style="color:#808080">&gt;</span><span style="color:#cccccc">Company</span><span style="color:#808080">&lt;/</span><span style="color:#569cd6">p</span><span style="color:#808080">&gt;</span>
<span style="color:#cccccc">                          </span><span style="color:#808080">&lt;</span><span style="color:#569cd6">p</span><span style="color:#9cdcfe"> class</span><span style="color:#cccccc">=</span><span style="color:#ce9178">"resume-entry-dates"</span><span style="color:#808080">&gt;</span><span style="color:#cccccc">2019 - 2021</span><span style="color:#808080">&lt;/</span><span style="color:#569cd6">p</span><span style="color:#808080">&gt;</span>
<span style="color:#cccccc">                        </span><span style="color:#808080">&lt;/</span><span style="color:#569cd6">div</span><span style="color:#808080">&gt;</span>
<span style="color:#cccccc">                        </span><span style="color:#808080">&lt;</span><span style="color:#569cd6">div</span><span style="color:#9cdcfe"> class</span><span style="color:#cccccc">=</span><span style="color:#ce9178">"resume-chips"</span><span style="color:#808080">&gt;</span>
<span style="color:#cccccc">                      </span><span style="color:#808080">&lt;/</span><span style="color:#569cd6">div</span><span style="color:#808080">&gt;</span>
<span style="color:#cccccc">                      </span><span style="color:#808080">&lt;</span><span style="color:#569cd6">p</span><span style="color:#9cdcfe"> class</span><span style="color:#cccccc">=</span><span style="color:#ce9178">"resume-entry-summary"</span><span style="color:#808080">&gt;</span>
<span style="color:#cccccc">                      </span><span style="color:#808080">&lt;</span><span style="color:#569cd6">ul</span><span style="color:#9cdcfe"> class</span><span style="color:#cccccc">=</span><span style="color:#ce9178">"resume-entry-list"</span><span style="color:#808080">&gt;</span>
<span style="color:#cccccc">                        </span><span style="color:#808080">&lt;</span><span style="color:#569cd6">li</span><span style="color:#808080">&gt;</span><span style="color:#cccccc">Led UX and visual</span>
<span style="color:#cccccc">                        </span><span style="color:#808080">&lt;</span><span style="color:#569cd6">li</span><span style="color:#808080">&gt;</span><span style="color:#cccccc">Delivered product</span>
<span style="color:#cccccc">                      </span><span style="color:#808080">&lt;/</span><span style="color:#569cd6">ul</span><span style="color:#808080">&gt;</span>
<span style="color:#cccccc">                    </span><span style="color:#808080">&lt;/</span><span style="color:#569cd6">div</span><span style="color:#808080">&gt;</span>

<span style="color:#cccccc">                    </span><span style="color:#808080">&lt;</span><span style="color:#569cd6">div</span><span style="color:#9cdcfe"> class</span><span style="color:#cccccc">=</span><span style="color:#ce9178">"resume-entry"</span><span style="color:#808080">&gt;</span>
<span style="color:#cccccc">                      </span><span style="color:#808080">&lt;</span><span style="color:#569cd6">div</span><span style="color:#9cdcfe"> class</span><span style="color:#cccccc">=</span><span style="color:#ce9178">"resume-entry-header"</span><span style="color:#808080">&gt;</span>
<span style="color:#cccccc">                        </span><span style="color:#808080">&lt;</span><span style="color:#569cd6">div</span><span style="color:#9cdcfe"> class</span><span style="color:#cccccc">=</span><span style="color:#ce9178">"resume-entry-heading"</span><span style="color:#808080">&gt;</span>
<span style="color:#cccccc">                          </span><span style="color:#808080">&lt;</span><span style="color:#569cd6">h3</span><span style="color:#9cdcfe"> class</span><span style="color:#cccccc">=</span><span style="color:#ce9178">"resume-entry-title"</span><span style="color:#808080">&gt;</span><span style="color:#cccccc">Lead Designer</span><span style="color:#808080">&lt;/</span><span style="color:#569cd6">h3</span><span style="color:#808080">&gt;</span>
<span style="color:#cccccc">                          </span><span style="color:#808080">&lt;</span><span style="color:#569cd6">p</span><span style="color:#9cdcfe"> class</span><span style="color:#cccccc">=</span><span style="color:#ce9178">"resume-entry-company"</span><span style="color:#808080">&gt;</span><span style="color:#cccccc">Company</span><span style="color:#808080">&lt;/</span><span style="color:#569cd6">p</span><span style="color:#808080">&gt;</span>
<span style="color:#cccccc">                          </span><span style="color:#808080">&lt;</span><span style="color:#569cd6">p</span><span style="color:#9cdcfe"> class</span><span style="color:#cccccc">=</span><span style="color:#ce9178">"resume-entry-dates"</span><span style="color:#808080">&gt;</span><span style="color:#cccccc">2019 - 2021</span><span style="color:#808080">&lt;/</span><span style="color:#569cd6">p</span><span style="color:#808080">&gt;</span>
<span style="color:#cccccc">                        </span><span style="color:#808080">&lt;/</span><span style="color:#569cd6">div</span><span style="color:#808080">&gt;</span>
<span style="color:#cccccc">                        </span><span style="color:#808080">&lt;</span><span style="color:#569cd6">div</span><span style="color:#9cdcfe"> class</span><span style="color:#cccccc">=</span><span style="color:#ce9178">"resume-chips"</span><span style="color:#808080">&gt;</span>
<span style="color:#cccccc">                      </span><span style="color:#808080">&lt;/</span><span style="color:#569cd6">div</span><span style="color:#808080">&gt;</span>
<span style="color:#cccccc">                      </span><span style="color:#808080">&lt;</span><span style="color:#569cd6">p</span><span style="color:#9cdcfe"> class</span><span style="color:#cccccc">=</span><span style="color:#ce9178">"resume-entry-summary"</span><span style="color:#808080">&gt;</span>
<span style="color:#cccccc">                      </span><span style="color:#808080">&lt;</span><span style="color:#569cd6">ul</span><span style="color:#9cdcfe"> class</span><span style="color:#cccccc">=</span><span style="color:#ce9178">"resume-entry-list"</span><span style="color:#808080">&gt;</span>
<span style="color:#cccccc">                        </span><span style="color:#808080">&lt;</span><span style="color:#569cd6">li</span><span style="color:#808080">&gt;</span><span style="color:#cccccc">Directed UX acros</span>
<span style="color:#cccccc">                        </span><span style="color:#808080">&lt;</span><span style="color:#569cd6">li</span><span style="color:#808080">&gt;</span><span style="color:#cccccc">Shipped in game e</span>
<span style="color:#cccccc">                        </span><span style="color:#808080">&lt;</span><span style="color:#569cd6">li</span><span style="color:#808080">&gt;</span><span style="color:#cccccc">Established user</span>
<span style="color:#cccccc">                      </span><span style="color:#808080">&lt;/</span><span style="color:#569cd6">ul</span><span style="color:#808080">&gt;</span>
<span style="color:#cccccc">                    </span><span style="color:#808080">&lt;/</span><span style="color:#569cd6">div</span><span style="color:#808080">&gt;</span>

<span style="color:#cccccc">                    </span><span style="color:#808080">&lt;</span><span style="color:#569cd6">div</span><span style="color:#9cdcfe"> class</span><span style="color:#cccccc">=</span><span style="color:#ce9178">"resume-entry"</span><span style="color:#808080">&gt;</span>
<span style="color:#cccccc">                      </span><span style="color:#808080">&lt;</span><span style="color:#569cd6">div</span><span style="color:#9cdcfe"> class</span><span style="color:#cccccc">=</span><span style="color:#ce9178">"resume-entry-header"</span><span style="color:#808080">&gt;</span>
<span style="color:#cccccc">                        </span><span style="color:#808080">&lt;</span><span style="color:#569cd6">div</span><span style="color:#9cdcfe"> class</span><span style="color:#cccccc">=</span><span style="color:#ce9178">"resume-entry-heading"</span><span style="color:#808080">&gt;</span>
<span style="color:#cccccc">                          </span><span style="color:#808080">&lt;</span><span style="color:#569cd6">h3</span><span style="color:#9cdcfe"> class</span><span style="color:#cccccc">=</span><span style="color:#ce9178">"resume-entry-title"</span><span style="color:#808080">&gt;</span><span style="color:#cccccc">Lead Designer</span><span style="color:#808080">&lt;/</span><span style="color:#569cd6">h3</span><span style="color:#808080">&gt;</span>
<span style="color:#cccccc">                          </span><span style="color:#808080">&lt;</span><span style="color:#569cd6">p</span><span style="color:#9cdcfe"> class</span><span style="color:#cccccc">=</span><span style="color:#ce9178">"resume-entry-company"</span><span style="color:#808080">&gt;</span><span style="color:#cccccc">Company</span><span style="color:#808080">&lt;/</span><span style="color:#569cd6">p</span><span style="color:#808080">&gt;</span>
<span style="color:#cccccc">                          </span><span style="color:#808080">&lt;</span><span style="color:#569cd6">p</span><span style="color:#9cdcfe"> class</span><span style="color:#cccccc">=</span><span style="color:#ce9178">"resume-entry-dates"</span><span style="color:#808080">&gt;</span><span style="color:#cccccc">2019 - 2021</span><span style="color:#808080">&lt;/</span><span style="color:#569cd6">p</span><span style="color:#808080">&gt;</span>
<span style="color:#cccccc">                        </span><span style="color:#808080">&lt;/</span><span style="color:#569cd6">div</span><span style="color:#808080">&gt;</span>
<span style="color:#cccccc">                        </span><span style="color:#808080">&lt;</span><span style="color:#569cd6">div</span><span style="color:#9cdcfe"> class</span><span style="color:#cccccc">=</span><span style="color:#ce9178">"resume-chips"</span><span style="color:#808080">&gt;</span>
<span style="color:#cccccc">                      </span><span style="color:#808080">&lt;/</span><span style="color:#569cd6">div</span><span style="color:#808080">&gt;</span>
<span style="color:#cccccc">                      </span><span style="color:#808080">&lt;</span><span style="color:#569cd6">p</span><span style="color:#9cdcfe"> class</span><span style="color:#cccccc">=</span><span style="color:#ce9178">"resume-entry-summary"</span><span style="color:#808080">&gt;</span>
<span style="color:#cccccc">                      </span><span style="color:#808080">&lt;</span><span style="color:#569cd6">ul</span><span style="color:#9cdcfe"> class</span><span style="color:#cccccc">=</span><span style="color:#ce9178">"resume-entry-list"</span><span style="color:#808080">&gt;</span>
<span style="color:#cccccc">                        </span><span style="color:#808080">&lt;</span><span style="color:#569cd6">li</span><span style="color:#808080">&gt;</span><span style="color:#cccccc">Redesigned Global</span>
<span style="color:#cccccc">                        </span><span style="color:#808080">&lt;</span><span style="color:#569cd6">li</span><span style="color:#808080">&gt;</span><span style="color:#cccccc">Resolved major us</span>
<span style="color:#cccccc">                      </span><span style="color:#808080">&lt;/</span><span style="color:#569cd6">ul</span><span style="color:#808080">&gt;</span>
<span style="color:#cccccc">                    </span><span style="color:#808080">&lt;/</span><span style="color:#569cd6">div</span><span style="color:#808080">&gt;</span>

<span style="color:#cccccc">                  </span><span style="color:#808080">&lt;/</span><span style="color:#569cd6">div</span><span style="color:#808080">&gt;</span>
<span style="color:#cccccc">                </span><span style="color:#808080">&lt;/</span><span style="color:#569cd6">div</span><span style="color:#808080">&gt;</span>
<span style="color:#cccccc">              </span><span style="color:#808080">&lt;/</span><span style="color:#569cd6">article</span><span style="color:#808080">&gt;</span>

<span style="color:#cccccc">              </span><span style="color:#6a9955">&lt;!-- PANEL 3: Earlier Work. Toolin</span>
<span style="color:#cccccc">              </span><span style="color:#808080">&lt;</span><span style="color:#569cd6">article</span><span style="color:#9cdcfe"> class</span><span style="color:#cccccc">=</span><span style="color:#ce9178">"resume-card resu</span>
<span style="color:#cccccc">                </span><span style="color:#808080">&lt;</span><span style="color:#569cd6">div</span><span style="color:#9cdcfe"> class</span><span style="color:#cccccc">=</span><span style="color:#ce9178">"resume-inner"</span><span style="color:#808080">&gt;</span>

<span style="color:#cccccc">                  </span><span style="color:#808080">&lt;</span><span style="color:#569cd6">div</span><span style="color:#9cdcfe"> class</span><span style="color:#cccccc">=</span><span style="color:#ce9178">"resume-section"</span><span style="color:#808080">&gt;</span>
<span style="color:#cccccc">                    </span><span style="color:#808080">&lt;</span><span style="color:#569cd6">div</span><span style="color:#9cdcfe"> class</span><span style="color:#cccccc">=</span><span style="color:#ce9178">"resume-section</span>
<span style="color:#cccccc">                      </span><span style="color:#808080">&lt;</span><span style="color:#569cd6">div</span><span style="color:#9cdcfe"> class</span><span style="color:#cccccc">=</span><span style="color:#ce9178">"resume-section</span>
<span style="color:#cccccc">                    </span><span style="color:#808080">&lt;/</span><span style="color:#569cd6">div</span><span style="color:#808080">&gt;</span>
<span style="color:#cccccc">                    </span><span style="color:#808080">&lt;</span><span style="color:#569cd6">div</span><span style="color:#9cdcfe"> class</span><span style="color:#cccccc">=</span><span style="color:#ce9178">"resume-earlier"</span><span style="color:#808080">&gt;</span>
<span style="color:#cccccc">                      </span><span style="color:#808080">&lt;</span><span style="color:#569cd6">div</span><span style="color:#9cdcfe"> class</span><span style="color:#cccccc">=</span><span style="color:#ce9178">"resume-earl</span>
<span style="color:#cccccc">                        </span><span style="color:#808080">&lt;</span><span style="color:#569cd6">p</span><span style="color:#9cdcfe"> class</span><span style="color:#cccccc">=</span><span style="color:#ce9178">"resume-earl</span>
<span style="color:#cccccc">                        </span><span style="color:#808080">&lt;</span><span style="color:#569cd6">span</span><span style="color:#9cdcfe"> class</span><span style="color:#cccccc">=</span><span style="color:#ce9178">"resume-earl</span>
<span style="color:#cccccc">                      </span><span style="color:#808080">&lt;/</span><span style="color:#569cd6">div</span><span style="color:#808080">&gt;</span>
<span style="color:#cccccc">                      </span><span style="color:#808080">&lt;</span><span style="color:#569cd6">p</span><span style="color:#9cdcfe"> class</span><span style="color:#cccccc">=</span><span style="color:#ce9178">"resume-earlier</span>
<span style="color:#cccccc">                    </span><span style="color:#808080">&lt;/</span><span style="color:#569cd6">div</span><span style="color:#808080">&gt;</span>

<span style="color:#cccccc">                    </span><span style="color:#808080">&lt;</span><span style="color:#569cd6">div</span><span style="color:#9cdcfe"> class</span><span style="color:#cccccc">=</span><span style="color:#ce9178">"resume-earlier"</span><span style="color:#808080">&gt;</span>
<span style="color:#cccccc">                      </span><span style="color:#808080">&lt;</span><span style="color:#569cd6">div</span><span style="color:#9cdcfe"> class</span><span style="color:#cccccc">=</span><span style="color:#ce9178">"resume-earl</span>
<span style="color:#cccccc">                        </span><span style="color:#808080">&lt;</span><span style="color:#569cd6">p</span><span style="color:#9cdcfe"> class</span><span style="color:#cccccc">=</span><span style="color:#ce9178">"resume-earl</span>
<span style="color:#cccccc">                        </span><span style="color:#808080">&lt;</span><span style="color:#569cd6">span</span><span style="color:#9cdcfe"> class</span><span style="color:#cccccc">=</span><span style="color:#ce9178">"resume-earl</span>
<span style="color:#cccccc">                      </span><span style="color:#808080">&lt;/</span><span style="color:#569cd6">div</span><span style="color:#808080">&gt;</span>
<span style="color:#cccccc">                      </span><span style="color:#808080">&lt;</span><span style="color:#569cd6">p</span><span style="color:#9cdcfe"> class</span><span style="color:#cccccc">=</span><span style="color:#ce9178">"resume-earlier</span>
<span style="color:#cccccc">                    </span><span style="color:#808080">&lt;/</span><span style="color:#569cd6">div</span><span style="color:#808080">&gt;</span>

<span style="color:#cccccc">                    </span><span style="color:#808080">&lt;</span><span style="color:#569cd6">div</span><span style="color:#9cdcfe"> class</span><span style="color:#cccccc">=</span><span style="color:#ce9178">"resume-earlier"</span><span style="color:#808080">&gt;</span>
<span style="color:#cccccc">                      </span><span style="color:#808080">&lt;</span><span style="color:#569cd6">div</span><span style="color:#9cdcfe"> class</span><span style="color:#cccccc">=</span><span style="color:#ce9178">"resume-earl</span>
<span style="color:#cccccc">                        </span><span style="color:#808080">&lt;</span><span style="color:#569cd6">p</span><span style="color:#9cdcfe"> class</span><span style="color:#cccccc">=</span><span style="color:#ce9178">"resume-earl</span>
<span style="color:#cccccc">                        </span><span style="color:#808080">&lt;</span><span style="color:#569cd6">span</span><span style="color:#9cdcfe"> class</span><span style="color:#cccccc">=</span><span style="color:#ce9178">"resume-earl</span>
<span style="color:#cccccc">                      </span><span style="color:#808080">&lt;/</span><span style="color:#569cd6">div</span><span style="color:#808080">&gt;</span>
<span style="color:#cccccc">                      </span><span style="color:#808080">&lt;</span><span style="color:#569cd6">p</span><span style="color:#9cdcfe"> class</span><span style="color:#cccccc">=</span><span style="color:#ce9178">"resume-earlier</span>
<span style="color:#cccccc">                    </span><span style="color:#808080">&lt;/</span><span style="color:#569cd6">div</span><span style="color:#808080">&gt;</span>

<span style="color:#cccccc">                    </span><span style="color:#808080">&lt;</span><span style="color:#569cd6">div</span><span style="color:#9cdcfe"> class</span><span style="color:#cccccc">=</span><span style="color:#ce9178">"resume-earlier"</span><span style="color:#808080">&gt;</span>
<span style="color:#cccccc">                      </span><span style="color:#808080">&lt;</span><span style="color:#569cd6">div</span><span style="color:#9cdcfe"> class</span><span style="color:#cccccc">=</span><span style="color:#ce9178">"resume-earl</span>
<span style="color:#cccccc">                        </span><span style="color:#808080">&lt;</span><span style="color:#569cd6">p</span><span style="color:#9cdcfe"> class</span><span style="color:#cccccc">=</span><span style="color:#ce9178">"resume-earl</span>
<span style="color:#cccccc">                        </span><span style="color:#808080">&lt;</span><span style="color:#569cd6">span</span><span style="color:#9cdcfe"> class</span><span style="color:#cccccc">=</span><span style="color:#ce9178">"resume-earl</span>
<span style="color:#cccccc">                      </span><span style="color:#808080">&lt;/</span><span style="color:#569cd6">div</span><span style="color:#808080">&gt;</span>
<span style="color:#cccccc">                      </span><span style="color:#808080">&lt;</span><span style="color:#569cd6">p</span><span style="color:#9cdcfe"> class</span><span style="color:#cccccc">=</span><span style="color:#ce9178">"resume-earlier</span>
<span style="color:#cccccc">                    </span><span style="color:#808080">&lt;/</span><span style="color:#569cd6">div</span><span style="color:#808080">&gt;</span>

<span style="color:#cccccc">                    </span><span style="color:#808080">&lt;</span><span style="color:#569cd6">div</span><span style="color:#9cdcfe"> class</span><span style="color:#cccccc">=</span><span style="color:#ce9178">"resume-earlier"</span><span style="color:#808080">&gt;</span>
<span style="color:#cccccc">                      </span><span style="color:#808080">&lt;</span><span style="color:#569cd6">div</span><span style="color:#9cdcfe"> class</span><span style="color:#cccccc">=</span><span style="color:#ce9178">"resume-earl</span>
<span style="color:#cccccc">                        </span><span style="color:#808080">&lt;</span><span style="color:#569cd6">p</span><span style="color:#9cdcfe"> class</span><span style="color:#cccccc">=</span><span style="color:#ce9178">"resume-earl</span>
<span style="color:#cccccc">                        </span><span style="color:#808080">&lt;</span><span style="color:#569cd6">span</span><span style="color:#9cdcfe"> class</span><span style="color:#cccccc">=</span><span style="color:#ce9178">"resume-earl</span>
<span style="color:#cccccc">                      </span><span style="color:#808080">&lt;/</span><span style="color:#569cd6">div</span><span style="color:#808080">&gt;</span>
<span style="color:#cccccc">                      </span><span style="color:#808080">&lt;</span><span style="color:#569cd6">p</span><span style="color:#9cdcfe"> class</span><span style="color:#cccccc">=</span><span style="color:#ce9178">"resume-earlier</span>
<span style="color:#cccccc">                    </span><span style="color:#808080">&lt;/</span><span style="color:#569cd6">div</span><span style="color:#808080">&gt;</span>
</div></div>
<div style="position:absolute;left:2835px;top:196px;width:26px;height:597px;background:#1f1f1f;"></div>
<div style="position:absolute;left:2835px;top:196px;width:1.5px;height:597px;background:#0e0e12;"></div>
<div style="position:absolute;left:2837px;top:196px;width:24px;height:4px;background:#5a5a5a;"></div>
<div style="position:absolute;left:936px;top:795px;width:1925px;height:996px;background:#181818;"></div>
<div style="position:absolute;left:980px;top:819.28px;font-family:'Liberation Sans', sans-serif;font-size:23.8px;line-height:30.94px;color:#9d9d9d;white-space:pre;transform:scaleX(0.8771);transform-origin:0 0;">PROBLEMS</div>
<div style="position:absolute;left:1147px;top:819.28px;font-family:'Liberation Sans', sans-serif;font-size:23.8px;line-height:30.94px;color:#9d9d9d;white-space:pre;transform:scaleX(0.9200);transform-origin:0 0;">OUTPUT</div>
<div style="position:absolute;left:1288px;top:819.28px;font-family:'Liberation Sans', sans-serif;font-size:23.8px;line-height:30.94px;color:#9d9d9d;white-space:pre;transform:scaleX(0.8959);transform-origin:0 0;">DEBUG CONSOLE</div>
<div style="position:absolute;left:1525px;top:819.28px;font-family:'Liberation Sans', sans-serif;font-size:23.8px;line-height:30.94px;color:#e7e7e7;white-space:pre;transform:scaleX(0.9308);transform-origin:0 0;">TERMINAL</div>
<div style="position:absolute;left:1687px;top:819.28px;font-family:'Liberation Sans', sans-serif;font-size:23.8px;line-height:30.94px;color:#9d9d9d;white-space:pre;transform:scaleX(0.8461);transform-origin:0 0;">PORTS</div>
<div style="position:absolute;left:1520px;top:855px;width:120px;height:3px;background:#0078d4;"></div>
<svg style="position:absolute;left:2334px;top:816px;" width="36" height="36" viewBox="0 0 36 36" fill="none"><rect x="2.5" y="2.5" width="31" height="31" rx="5" stroke="#cccccc" stroke-width="2.4"/><path d="M8 11l8 6.5L8 24M17 26h10" stroke="#cccccc" stroke-width="2.4" stroke-linecap="round" stroke-linejoin="round"/></svg>
<div style="position:absolute;left:2378px;top:817.09px;font-family:'Liberation Sans', sans-serif;font-size:26px;line-height:33.8px;color:#cccccc;white-space:pre;transform:scaleX(0.9079);transform-origin:0 0;">codex</div>
<svg style="position:absolute;left:2461px;top:818px;" width="34" height="34" viewBox="0 0 34 34" fill="none"><path d="M17 3v28M3 17h28" stroke="#cccccc" stroke-width="2.4"/></svg>
<svg style="position:absolute;left:2503px;top:826px;" width="22" height="16" viewBox="0 0 22 16" fill="none"><path d="M2 3l9 9 9-9" stroke="#cccccc" stroke-width="2.2" stroke-linecap="round" stroke-linejoin="round"/></svg>
<svg style="position:absolute;left:2546px;top:816px;" width="36" height="36" viewBox="0 0 36 36" fill="none"><rect x="2.5" y="2.5" width="30" height="30" rx="6" stroke="#cccccc" stroke-width="2.4"/><path d="M17.5 2.5v30" stroke="#cccccc" stroke-width="2.4"/></svg>
<svg style="position:absolute;left:2602px;top:814px;" width="36" height="38" viewBox="0 0 36 38" fill="none"><path d="M3 8h29M12 8V5a3 3 0 0 1 3-3h5a3 3 0 0 1 3 3v3M6 8l2.5 24a3 3 0 0 0 3 2.5h12a3 3 0 0 0 3-2.5L29 8M14.5 14v14M20.5 14v14" stroke="#cccccc" stroke-width="2.4" stroke-linejoin="round" stroke-linecap="round"/></svg>
<svg style="position:absolute;left:2664px;top:831.2px;" width="25" height="6" viewBox="0 0 25 6" fill="none"><circle cx="2.8" cy="2.8" r="2.8" fill="#cccccc"/><circle cx="12.1" cy="2.8" r="2.8" fill="#cccccc"/><circle cx="21.4" cy="2.8" r="2.8" fill="#cccccc"/></svg>
<div style="position:absolute;left:2716px;top:817px;width:2px;height:33px;background:#4a4a4a;"></div>
<svg style="position:absolute;left:2744px;top:818px;" width="32" height="32" viewBox="0 0 32 32" fill="none"><path d="M3 10V6a3 3 0 0 1 3-3h4M22 3h4a3 3 0 0 1 3 3v4M29 22v4a3 3 0 0 1-3 3h-4M10 29H6a3 3 0 0 1-3-3v-4" stroke="#cccccc" stroke-width="2.4" stroke-linecap="round"/></svg>
<svg style="position:absolute;left:2805px;top:823px;" width="22" height="22" viewBox="0 0 22 22" fill="none"><path d="M1.5 1.5 20.5 20.5M20.5 1.5 1.5 20.5" stroke="#cccccc" stroke-width="2.4"/></svg>
<div style="position:absolute;left:1010px;top:1019.56px;font-family:'Liberation Mono', monospace;font-size:26.67px;line-height:34.67px;color:#cccccc;white-space:pre;"><span style="color:#cccccc">Downward remains </span><span style="color:#17acd6">2s cubic-bezier(0.20, 0.80, 0.05, 1.00)</span><span style="color:#cccccc">:</span></div>
<div style="position:absolute;left:1010px;top:1167.56px;font-family:'Liberation Mono', monospace;font-size:26.67px;line-height:34.67px;color:#cccccc;white-space:pre;"><span style="color:#cccccc">- </span><span style="color:#17acd6">index.html:324</span></div>
<div style="position:absolute;left:1010px;top:1241.56px;font-family:'Liberation Mono', monospace;font-size:26.67px;line-height:34.67px;color:#cccccc;white-space:pre;"><span style="color:#cccccc">- </span><span style="color:#17acd6">index.html:327</span></div>
<svg style="position:absolute;left:982px;top:1470px;" width="12" height="18" viewBox="0 0 12 18" fill="none"><path d="M2.5 2.5 9 9l-6.5 6.5" stroke="#8a8a8a" stroke-width="2.4" stroke-linecap="round" stroke-linejoin="round"/></svg>
<div style="position:absolute;left:1010px;top:1463.56px;font-family:'Liberation Mono', monospace;font-size:26.67px;line-height:34.67px;color:#cccccc;white-space:pre;"><span style="color:#cccccc">please hide the trust banner so I can better see the animation. do not change any code other than hiding the</span></div>
<div style="position:absolute;left:1010px;top:1537.56px;font-family:'Liberation Mono', monospace;font-size:26.67px;line-height:34.67px;color:#cccccc;white-space:pre;"><span style="color:#cccccc">section so it can easily be shown again.</span></div>
<div style="position:absolute;left:936px;top:1700px;width:1925px;height:91px;overflow:hidden;">
<div style="position:absolute;left:-936px;top:-1700px;width:2861px;height:1837px;">
<svg style="position:absolute;left:980px;top:1770px;" width="12" height="12" viewBox="0 0 12 12" fill="none"><circle cx="6" cy="6" r="5" fill="#8a8a8a"/></svg>
<div style="position:absolute;left:1010px;top:1759.56px;font-family:'Liberation Mono', monospace;font-size:26.67px;line-height:34.67px;color:#cccccc;white-space:pre;"><span style="color:#cccccc">I’ll hide only the trust section by adding a reversible </span><span style="color:#17acd6">hidden</span><span style="color:#cccccc"> attribute on the </span><span style="color:#17acd6">&lt;section id="trust"...&gt;</span><span style="color:#cccccc"> tag, with</span></div>
</div></div>
<div style="position:absolute;left:2835px;top:904px;width:2px;height:887px;background:#121212;"></div>
<div style="position:absolute;left:2836px;top:904px;width:10px;height:7px;background:#5a5a5a;"></div>
<div style="position:absolute;left:0px;top:1794px;width:2861px;height:43px;background:#181818;"></div>
<div style="position:absolute;left:0px;top:1792px;width:2861px;height:2px;background:#2b2b2b;"></div>
<svg style="position:absolute;left:26px;top:1797px;" width="28" height="34" viewBox="0 0 28 34" fill="none"><path d="M3 11.5l9.5 9L3 30M24.5 2.5 14 12l10.5 9" stroke="#cccccc" stroke-width="2.4" stroke-linecap="round" stroke-linejoin="round"/></svg>
<svg style="position:absolute;left:93px;top:1796px;" width="38" height="40" viewBox="0 0 38 40" fill="none"><circle cx="8.6" cy="7" r="4.6" stroke="#cccccc" stroke-width="2.4"/><circle cx="8.6" cy="30" r="4.6" stroke="#cccccc" stroke-width="2.4"/><path d="M8.6 11.6v13.8" stroke="#cccccc" stroke-width="2.4"/><circle cx="24" cy="14" r="4.6" stroke="#cccccc" stroke-width="2.4"/><circle cx="24" cy="26" r="10.5" fill="#cccccc"/><path d="M24 19.5v13M18.4 22.75l11.2 6.5M29.6 22.75l-11.2 6.5" stroke="#181818" stroke-width="2.2"/></svg>
<div style="position:absolute;left:134px;top:1801.09px;font-family:'Liberation Sans', sans-serif;font-size:26px;line-height:33.8px;color:#cccccc;white-space:pre;transform:scaleX(1.0078);transform-origin:0 0;">main*</div>
<svg style="position:absolute;left:214px;top:1796px;" width="34" height="38" viewBox="0 0 34 38" fill="none"><path d="M16 5.5A11.5 11.5 0 0 0 11 27.5M18 30.5A11.5 11.5 0 0 0 23 8.5" stroke="#cccccc" stroke-width="2.4" stroke-linecap="round"/><path d="M13.5 1.5l4 4-4 4M20.5 26.5l-4 4 4 4" stroke="#cccccc" stroke-width="2.4" stroke-linecap="round" stroke-linejoin="round"/></svg>
<svg style="position:absolute;left:282px;top:1797px;" width="36" height="36" viewBox="0 0 36 36" fill="none"><path d="M4 32l2-9L24 5a3.5 3.5 0 0 1 5 0l2 2a3.5 3.5 0 0 1 0 5L13 30z M20 9l7 7" stroke="#e5c100" stroke-width="2.4" stroke-linejoin="round"/></svg>
<div style="position:absolute;left:325px;top:1801.09px;font-family:'Liberation Sans', sans-serif;font-size:26px;line-height:33.8px;color:#e5c100;white-space:pre;transform:scaleX(0.9318);transform-origin:0 0;">Pencil</div>
<svg style="position:absolute;left:425px;top:1797px;" width="36" height="36" viewBox="0 0 36 36" fill="none"><circle cx="18" cy="18" r="14.5" stroke="#cccccc" stroke-width="2.4"/><path d="M12 12l12 12M24 12 12 24" stroke="#cccccc" stroke-width="2.4"/></svg>
<div style="position:absolute;left:466px;top:1801.09px;font-family:'Liberation Sans', sans-serif;font-size:26px;line-height:33.8px;color:#cccccc;white-space:pre;">0</div>
<svg style="position:absolute;left:488px;top:1797px;" width="36" height="34" viewBox="0 0 36 34" fill="none"><path d="M18 3 33 30H3z" stroke="#cccccc" stroke-width="2.4" stroke-linejoin="round"/><path d="M18 12v9" stroke="#cccccc" stroke-width="2.6"/><circle cx="18" cy="25.5" r="1.7" fill="#cccccc"/></svg>
<div style="position:absolute;left:529px;top:1801.09px;font-family:'Liberation Sans', sans-serif;font-size:26px;line-height:33.8px;color:#cccccc;white-space:pre;">0</div>
<div style="position:absolute;left:1830px;top:1794px;width:69px;height:43px;background:#3a3d41;"></div>
<svg style="position:absolute;left:1846px;top:1798px;" width="36" height="36" viewBox="0 0 36 36" fill="none"><circle cx="14" cy="14" r="10.5" stroke="#cccccc" stroke-width="2.4"/><path d="M21.5 21.5 30 30M14 9v10M9 14h10" stroke="#cccccc" stroke-width="2.4" stroke-linecap="round"/></svg>
<div style="position:absolute;left:1916px;top:1801.09px;font-family:'Liberation Sans', sans-serif;font-size:26px;line-height:33.8px;color:#cccccc;white-space:pre;transform:scaleX(0.9384);transform-origin:0 0;">Ln 1, Col 1</div>
<div style="position:absolute;left:2070px;top:1801.09px;font-family:'Liberation Sans', sans-serif;font-size:26px;line-height:33.8px;color:#cccccc;white-space:pre;transform:scaleX(0.8993);transform-origin:0 0;">Spaces: 2</div>
<div style="position:absolute;left:2210px;top:1801.09px;font-family:'Liberation Sans', sans-serif;font-size:26px;line-height:33.8px;color:#cccccc;white-space:pre;transform:scaleX(0.9094);transform-origin:0 0;">UTF-8</div>
<div style="position:absolute;left:2313px;top:1801.09px;font-family:'Liberation Sans', sans-serif;font-size:26px;line-height:33.8px;color:#cccccc;white-space:pre;transform:scaleX(0.8099);transform-origin:0 0;">CRLF</div>
<div style="position:absolute;left:2451px;top:1801.09px;font-family:'Liberation Sans', sans-serif;font-size:26px;line-height:33.8px;color:#cccccc;white-space:pre;transform:scaleX(0.8042);transform-origin:0 0;">CSS</div>
<div style="position:absolute;left:2405px;top:1799.09px;font-family:'Liberation Sans', sans-serif;font-size:26px;line-height:33.8px;color:#cccccc;white-space:pre;transform:scaleX(1.3011);transform-origin:0 0;">{ }</div>
<svg style="position:absolute;left:2527px;top:1797px;" width="40" height="36" viewBox="0 0 40 36" fill="none"><path d="M2 23c0-5 3-9 8-10h20c5 1 8 5 8 10v2c0 4-8 9-18 9S2 29 2 25z" fill="#cccccc"/><rect x="7" y="3" width="13" height="14" rx="6.5" stroke="#cccccc" stroke-width="3.6" fill="#181818"/><rect x="20" y="3" width="13" height="14" rx="6.5" stroke="#cccccc" stroke-width="3.6" fill="#181818"/><rect x="7" y="18" width="26" height="11" rx="4" fill="#181818"/><path d="M16 22v4M24 22v4" stroke="#cccccc" stroke-width="3" stroke-linecap="round"/></svg>
<svg style="position:absolute;left:2600px;top:1807px;" width="20" height="20" viewBox="0 0 20 20" fill="none"><path d="M10 10L10.00 20.00" stroke="#cccccc" stroke-width="2.4" stroke-linecap="round"/><path d="M10 10L1.34 15.00" stroke="#cccccc" stroke-width="2.4" stroke-linecap="round"/><path d="M10 10L1.34 5.00" stroke="#cccccc" stroke-width="2.4" stroke-linecap="round"/><path d="M10 10L10.00 0.00" stroke="#cccccc" stroke-width="2.4" stroke-linecap="round"/><path d="M10 10L18.66 5.00" stroke="#cccccc" stroke-width="2.4" stroke-linecap="round"/><path d="M10 10L18.66 15.00" stroke="#cccccc" stroke-width="2.4" stroke-linecap="round"/></svg>
<div style="position:absolute;left:2628px;top:1801.09px;font-family:'Liberation Sans', sans-serif;font-size:26px;line-height:33.8px;color:#cccccc;white-space:pre;transform:scaleX(0.9619);transform-origin:0 0;">Claude Code</div>
<svg style="position:absolute;left:2808px;top:1797px;" width="36" height="38" viewBox="0 0 36 38" fill="none"><path d="M6 27h24l-3-4v-8a9 9 0 0 0-18 0v8z" stroke="#cccccc" stroke-width="2.4" stroke-linejoin="round"/><path d="M14 31a4 4 0 0 0 8 0" stroke="#cccccc" stroke-width="2.4"/></svg>
<div style="position:absolute;left:1px;top:-2px;width:2880px;height:1841px;box-sizing:border-box;border-left:2px solid #3c3c3c;border-top:2px solid #3c3c3c;border-bottom:2px solid #3c3c3c;border-radius:10px 0 0 10px;"></div>
<div style="position:absolute;left:0px;top:0px;width:1px;height:1837px;background:#0e0e0e;"></div></body></html>
